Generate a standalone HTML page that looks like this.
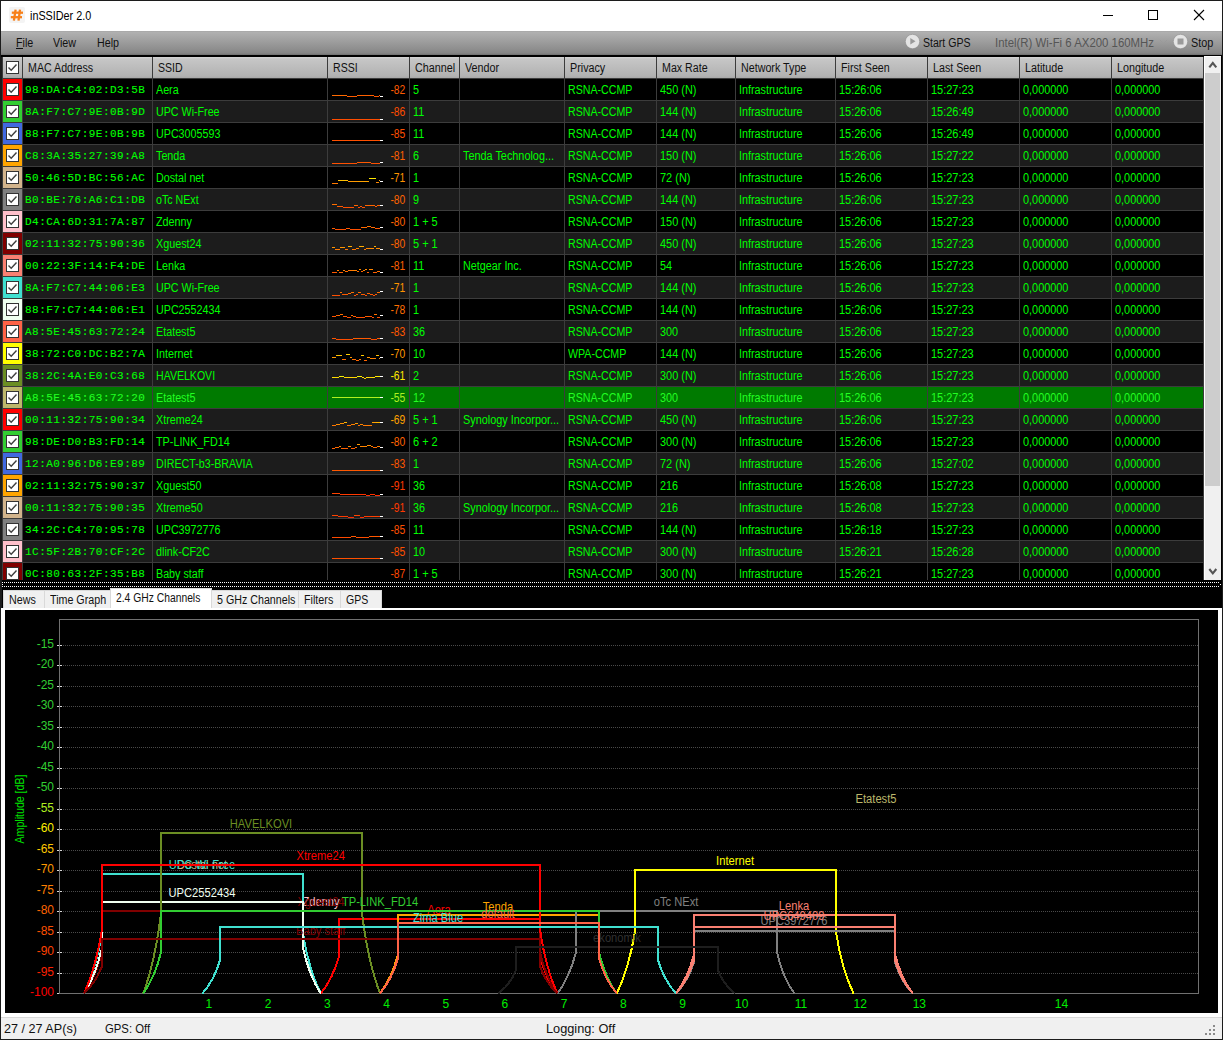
<!DOCTYPE html><html><head><meta charset="utf-8"><title>inSSIDer 2.0</title><style>
*{box-sizing:border-box}
html,body{margin:0;padding:0}
body{width:1223px;height:1040px;overflow:hidden;position:relative;background:#f0f0f0;font-family:"Liberation Sans",sans-serif;font-size:12px}
.a{position:absolute}
.t{position:absolute;white-space:nowrap;transform-origin:0 0;line-height:14px}
.sx{display:inline-block;transform:scaleX(.86);transform-origin:0 50%}

</style></head><body>
<div class="a" style="left:0;top:0;width:1223px;height:1040px;background:#1c1c1c"></div>
<div class="a" style="left:1px;top:1px;width:1221px;height:30px;background:#fff"></div>
<div class="a" style="left:9px;top:7px;width:16px;height:16px;background:#f4f4f4;border-radius:2px"></div>
<svg class="a" style="left:9px;top:7px" width="16" height="16"><g stroke="#f7801a" stroke-width="2.3" fill="none"><line x1="6.6" y1="2.6" x2="4.9" y2="13.6"/><line x1="11" y1="2.6" x2="9.5" y2="13.6"/><line x1="2.8" y1="5.7" x2="14" y2="5.7"/><line x1="1.8" y1="10.2" x2="13" y2="10.2"/></g></svg>
<div class="t" style="left:30px;top:9px;font-size:12px;color:#000"><span class="sx" style="transform:scaleX(.9)">inSSIDer 2.0</span></div>
<svg class="a" style="left:1090px;top:1px" width="132" height="30"><g stroke="#000" stroke-width="1" fill="none" shape-rendering="crispEdges"><line x1="13" y1="14.5" x2="23" y2="14.5"/><rect x="58.5" y="9.5" width="9" height="9"/></g><g stroke="#000" stroke-width="1.1" fill="none"><line x1="104" y1="9" x2="114" y2="19"/><line x1="114" y1="9" x2="104" y2="19"/></g></svg>
<div class="a" style="left:1px;top:31px;width:1221px;height:24px;background:linear-gradient(#a6a6a6,#b0b0b0 6%,#868686 92%,#6e6e6e)"></div>
<div class="a" style="left:1px;top:55px;width:1221px;height:2px;background:#000"></div>
<div class="t" style="left:16px;top:36px;color:#111"><span class="sx" style="transform:scaleX(0.892)">File</span></div>
<div class="t" style="left:53px;top:36px;color:#111"><span class="sx" style="transform:scaleX(0.894)">View</span></div>
<div class="t" style="left:97px;top:36px;color:#111"><span class="sx" style="transform:scaleX(0.893)">Help</span></div>
<div class="a" style="left:16px;top:48px;width:7px;height:1px;background:#111"></div>
<svg class="a" style="left:903.5px;top:33.3px" width="18" height="18"><circle cx="8.5" cy="8.5" r="7.2" fill="#e4e4e4" stroke="#8c8c8c" stroke-opacity=".6"/><path d="M6.3 5 L11.5 8.3 L6.3 11.5 Z" fill="#9a9a9a"/></svg>
<div class="t" style="left:923px;top:36px;color:#111"><span class="sx" style="transform:scaleX(.88)">Start GPS</span></div>
<div class="t" style="left:995px;top:36px;color:#555"><span class="sx" style="transform:scaleX(.95)">Intel(R) Wi-Fi 6 AX200 160MHz</span></div>
<svg class="a" style="left:1159px;top:39px" width="10" height="6"><path d="M1 1 L4.5 4.5 L8 1" stroke="#9a9a9a" fill="none"/></svg>
<svg class="a" style="left:1171.5px;top:32.5px" width="18" height="18"><circle cx="8.5" cy="8.5" r="7.2" fill="#e4e4e4" stroke="#8c8c8c" stroke-opacity=".6"/><rect x="5.5" y="5.5" width="6" height="6" fill="#9a9a9a"/></svg>
<div class="t" style="left:1191px;top:36px;color:#111"><span class="sx" style="transform:scaleX(.9)">Stop</span></div>
<div class="a" style="left:2px;top:57px;width:1220px;height:533px;background:#000"></div>
<div class="a" style="left:3px;top:57px;width:19px;height:21px;background:linear-gradient(#d6d6d6,#c6c6c6 10%,#b2b2b2 90%,#a8a8a8)"></div>
<div class="a" style="left:23px;top:57px;width:129px;height:21px;background:linear-gradient(#d6d6d6,#c6c6c6 10%,#b2b2b2 90%,#a8a8a8)"></div>
<div class="a" style="left:153px;top:57px;width:174px;height:21px;background:linear-gradient(#d6d6d6,#c6c6c6 10%,#b2b2b2 90%,#a8a8a8)"></div>
<div class="a" style="left:328px;top:57px;width:81px;height:21px;background:linear-gradient(#d6d6d6,#c6c6c6 10%,#b2b2b2 90%,#a8a8a8)"></div>
<div class="a" style="left:410px;top:57px;width:49px;height:21px;background:linear-gradient(#d6d6d6,#c6c6c6 10%,#b2b2b2 90%,#a8a8a8)"></div>
<div class="a" style="left:460px;top:57px;width:104px;height:21px;background:linear-gradient(#d6d6d6,#c6c6c6 10%,#b2b2b2 90%,#a8a8a8)"></div>
<div class="a" style="left:565px;top:57px;width:91px;height:21px;background:linear-gradient(#d6d6d6,#c6c6c6 10%,#b2b2b2 90%,#a8a8a8)"></div>
<div class="a" style="left:657px;top:57px;width:78px;height:21px;background:linear-gradient(#d6d6d6,#c6c6c6 10%,#b2b2b2 90%,#a8a8a8)"></div>
<div class="a" style="left:736px;top:57px;width:99px;height:21px;background:linear-gradient(#d6d6d6,#c6c6c6 10%,#b2b2b2 90%,#a8a8a8)"></div>
<div class="a" style="left:836px;top:57px;width:91px;height:21px;background:linear-gradient(#d6d6d6,#c6c6c6 10%,#b2b2b2 90%,#a8a8a8)"></div>
<div class="a" style="left:928px;top:57px;width:91px;height:21px;background:linear-gradient(#d6d6d6,#c6c6c6 10%,#b2b2b2 90%,#a8a8a8)"></div>
<div class="a" style="left:1020px;top:57px;width:91px;height:21px;background:linear-gradient(#d6d6d6,#c6c6c6 10%,#b2b2b2 90%,#a8a8a8)"></div>
<div class="a" style="left:1112px;top:57px;width:91px;height:21px;background:linear-gradient(#d6d6d6,#c6c6c6 10%,#b2b2b2 90%,#a8a8a8)"></div>
<div class="t" style="left:28px;top:61px;color:#111"><span class="sx" style="transform:scaleX(0.888)">MAC Address</span></div>
<div class="t" style="left:158px;top:61px;color:#111"><span class="sx" style="transform:scaleX(0.880)">SSID</span></div>
<div class="t" style="left:333px;top:61px;color:#111"><span class="sx" style="transform:scaleX(0.880)">RSSI</span></div>
<div class="t" style="left:415px;top:61px;color:#111"><span class="sx" style="transform:scaleX(0.896)">Channel</span></div>
<div class="t" style="left:465px;top:61px;color:#111"><span class="sx" style="transform:scaleX(0.896)">Vendor</span></div>
<div class="t" style="left:570px;top:61px;color:#111"><span class="sx" style="transform:scaleX(0.896)">Privacy</span></div>
<div class="t" style="left:662px;top:61px;color:#111"><span class="sx" style="transform:scaleX(0.889)">Max Rate</span></div>
<div class="t" style="left:741px;top:61px;color:#111"><span class="sx" style="transform:scaleX(0.893)">Network Type</span></div>
<div class="t" style="left:841px;top:61px;color:#111"><span class="sx" style="transform:scaleX(0.891)">First Seen</span></div>
<div class="t" style="left:933px;top:61px;color:#111"><span class="sx" style="transform:scaleX(0.891)">Last Seen</span></div>
<div class="t" style="left:1025px;top:61px;color:#111"><span class="sx" style="transform:scaleX(0.897)">Latitude</span></div>
<div class="t" style="left:1117px;top:61px;color:#111"><span class="sx" style="transform:scaleX(0.897)">Longitude</span></div>
<svg class="a" style="left:6px;top:61px" width="14" height="14"><rect x="0.5" y="0.5" width="12" height="12" fill="#fff" stroke="#333"/><path d="M2.5 6.5 L5.2 9.2 L10.5 3.5" stroke="#404040" stroke-width="1.4" fill="none"/></svg>
<div class="a" style="left:23px;top:79px;width:1180px;height:21px;background:#000"></div>
<div class="a" style="left:3px;top:79px;width:19px;height:21px;background:#ff0000"></div>
<svg class="a" style="left:6px;top:83px" width="14" height="14"><rect x="0.5" y="0.5" width="12" height="12" fill="#fff" stroke="#333"/><path d="M2.5 6.5 L5.2 9.2 L10.5 3.5" stroke="#404040" stroke-width="1.4" fill="none"/></svg>
<div class="t" style="left:25px;top:83px;color:#00ff00;font-family:'Liberation Mono', monospace;font-weight:normal;-webkit-text-stroke:0.1px #00ff00;font-size:11px;letter-spacing:0.48px">98:DA:C4:02:D3:5B</div>
<div class="t" style="left:155.5px;top:83px;color:#00ff00"><span class="sx" style="transform:scaleX(0.894)">Aera</span></div>
<div class="t" style="left:412.5px;top:83px;color:#00ff00"><span class="sx" style="transform:scaleX(0.900)">5</span></div>
<div class="t" style="left:567.5px;top:83px;color:#00ff00"><span class="sx" style="transform:scaleX(0.887)">RSNA-CCMP</span></div>
<div class="t" style="left:659.5px;top:83px;color:#00ff00"><span class="sx" style="transform:scaleX(0.911)">450 (N)</span></div>
<div class="t" style="left:738.5px;top:83px;color:#00ff00"><span class="sx" style="transform:scaleX(0.899)">Infrastructure</span></div>
<div class="t" style="left:838.5px;top:83px;color:#00ff00"><span class="sx" style="transform:scaleX(0.914)">15:26:06</span></div>
<div class="t" style="left:930.5px;top:83px;color:#00ff00"><span class="sx" style="transform:scaleX(0.914)">15:27:23</span></div>
<div class="t" style="left:1022.5px;top:83px;color:#00ff00"><span class="sx" style="transform:scaleX(0.907)">0,000000</span></div>
<div class="t" style="left:1114.5px;top:83px;color:#00ff00"><span class="sx" style="transform:scaleX(0.907)">0,000000</span></div>
<div class="t" style="left:385px;top:83px;width:20px;text-align:right;color:#ff5c00"><span class="sx" style="transform-origin:100% 50%">-82</span></div>
<div class="a" style="left:23px;top:101px;width:1180px;height:21px;background:#1c1c1c"></div>
<div class="a" style="left:3px;top:101px;width:19px;height:21px;background:#32cd32"></div>
<svg class="a" style="left:6px;top:105px" width="14" height="14"><rect x="0.5" y="0.5" width="12" height="12" fill="#fff" stroke="#333"/><path d="M2.5 6.5 L5.2 9.2 L10.5 3.5" stroke="#404040" stroke-width="1.4" fill="none"/></svg>
<div class="t" style="left:25px;top:105px;color:#00ff00;font-family:'Liberation Mono', monospace;font-weight:normal;-webkit-text-stroke:0.1px #00ff00;font-size:11px;letter-spacing:0.48px">8A:F7:C7:9E:0B:9D</div>
<div class="t" style="left:155.5px;top:105px;color:#00ff00"><span class="sx" style="transform:scaleX(0.891)">UPC Wi-Free</span></div>
<div class="t" style="left:412.5px;top:105px;color:#00ff00"><span class="sx" style="transform:scaleX(0.900)">11</span></div>
<div class="t" style="left:567.5px;top:105px;color:#00ff00"><span class="sx" style="transform:scaleX(0.887)">RSNA-CCMP</span></div>
<div class="t" style="left:659.5px;top:105px;color:#00ff00"><span class="sx" style="transform:scaleX(0.911)">144 (N)</span></div>
<div class="t" style="left:738.5px;top:105px;color:#00ff00"><span class="sx" style="transform:scaleX(0.899)">Infrastructure</span></div>
<div class="t" style="left:838.5px;top:105px;color:#00ff00"><span class="sx" style="transform:scaleX(0.914)">15:26:06</span></div>
<div class="t" style="left:930.5px;top:105px;color:#00ff00"><span class="sx" style="transform:scaleX(0.914)">15:26:49</span></div>
<div class="t" style="left:1022.5px;top:105px;color:#00ff00"><span class="sx" style="transform:scaleX(0.907)">0,000000</span></div>
<div class="t" style="left:1114.5px;top:105px;color:#00ff00"><span class="sx" style="transform:scaleX(0.907)">0,000000</span></div>
<div class="t" style="left:385px;top:105px;width:20px;text-align:right;color:#ff4d00"><span class="sx" style="transform-origin:100% 50%">-86</span></div>
<div class="a" style="left:23px;top:123px;width:1180px;height:21px;background:#000"></div>
<div class="a" style="left:3px;top:123px;width:19px;height:21px;background:#4169e1"></div>
<svg class="a" style="left:6px;top:127px" width="14" height="14"><rect x="0.5" y="0.5" width="12" height="12" fill="#fff" stroke="#333"/><path d="M2.5 6.5 L5.2 9.2 L10.5 3.5" stroke="#404040" stroke-width="1.4" fill="none"/></svg>
<div class="t" style="left:25px;top:127px;color:#00ff00;font-family:'Liberation Mono', monospace;font-weight:normal;-webkit-text-stroke:0.1px #00ff00;font-size:11px;letter-spacing:0.48px">88:F7:C7:9E:0B:9B</div>
<div class="t" style="left:155.5px;top:127px;color:#00ff00"><span class="sx" style="transform:scaleX(0.893)">UPC3005593</span></div>
<div class="t" style="left:412.5px;top:127px;color:#00ff00"><span class="sx" style="transform:scaleX(0.900)">11</span></div>
<div class="t" style="left:567.5px;top:127px;color:#00ff00"><span class="sx" style="transform:scaleX(0.887)">RSNA-CCMP</span></div>
<div class="t" style="left:659.5px;top:127px;color:#00ff00"><span class="sx" style="transform:scaleX(0.911)">144 (N)</span></div>
<div class="t" style="left:738.5px;top:127px;color:#00ff00"><span class="sx" style="transform:scaleX(0.899)">Infrastructure</span></div>
<div class="t" style="left:838.5px;top:127px;color:#00ff00"><span class="sx" style="transform:scaleX(0.914)">15:26:06</span></div>
<div class="t" style="left:930.5px;top:127px;color:#00ff00"><span class="sx" style="transform:scaleX(0.914)">15:26:49</span></div>
<div class="t" style="left:1022.5px;top:127px;color:#00ff00"><span class="sx" style="transform:scaleX(0.907)">0,000000</span></div>
<div class="t" style="left:1114.5px;top:127px;color:#00ff00"><span class="sx" style="transform:scaleX(0.907)">0,000000</span></div>
<div class="t" style="left:385px;top:127px;width:20px;text-align:right;color:#ff5000"><span class="sx" style="transform-origin:100% 50%">-85</span></div>
<div class="a" style="left:23px;top:145px;width:1180px;height:21px;background:#1c1c1c"></div>
<div class="a" style="left:3px;top:145px;width:19px;height:21px;background:#ffa500"></div>
<svg class="a" style="left:6px;top:149px" width="14" height="14"><rect x="0.5" y="0.5" width="12" height="12" fill="#fff" stroke="#333"/><path d="M2.5 6.5 L5.2 9.2 L10.5 3.5" stroke="#404040" stroke-width="1.4" fill="none"/></svg>
<div class="t" style="left:25px;top:149px;color:#00ff00;font-family:'Liberation Mono', monospace;font-weight:normal;-webkit-text-stroke:0.1px #00ff00;font-size:11px;letter-spacing:0.48px">C8:3A:35:27:39:A8</div>
<div class="t" style="left:155.5px;top:149px;color:#00ff00"><span class="sx" style="transform:scaleX(0.896)">Tenda</span></div>
<div class="t" style="left:412.5px;top:149px;color:#00ff00"><span class="sx" style="transform:scaleX(0.900)">6</span></div>
<div class="t" style="left:462.5px;top:149px;color:#00ff00"><span class="sx" style="transform:scaleX(0.905)">Tenda Technolog...</span></div>
<div class="t" style="left:567.5px;top:149px;color:#00ff00"><span class="sx" style="transform:scaleX(0.887)">RSNA-CCMP</span></div>
<div class="t" style="left:659.5px;top:149px;color:#00ff00"><span class="sx" style="transform:scaleX(0.911)">150 (N)</span></div>
<div class="t" style="left:738.5px;top:149px;color:#00ff00"><span class="sx" style="transform:scaleX(0.899)">Infrastructure</span></div>
<div class="t" style="left:838.5px;top:149px;color:#00ff00"><span class="sx" style="transform:scaleX(0.914)">15:26:06</span></div>
<div class="t" style="left:930.5px;top:149px;color:#00ff00"><span class="sx" style="transform:scaleX(0.914)">15:27:22</span></div>
<div class="t" style="left:1022.5px;top:149px;color:#00ff00"><span class="sx" style="transform:scaleX(0.907)">0,000000</span></div>
<div class="t" style="left:1114.5px;top:149px;color:#00ff00"><span class="sx" style="transform:scaleX(0.907)">0,000000</span></div>
<div class="t" style="left:385px;top:149px;width:20px;text-align:right;color:#ff6000"><span class="sx" style="transform-origin:100% 50%">-81</span></div>
<div class="a" style="left:23px;top:167px;width:1180px;height:21px;background:#000"></div>
<div class="a" style="left:3px;top:167px;width:19px;height:21px;background:#d2b48c"></div>
<svg class="a" style="left:6px;top:171px" width="14" height="14"><rect x="0.5" y="0.5" width="12" height="12" fill="#fff" stroke="#333"/><path d="M2.5 6.5 L5.2 9.2 L10.5 3.5" stroke="#404040" stroke-width="1.4" fill="none"/></svg>
<div class="t" style="left:25px;top:171px;color:#00ff00;font-family:'Liberation Mono', monospace;font-weight:normal;-webkit-text-stroke:0.1px #00ff00;font-size:11px;letter-spacing:0.48px">50:46:5D:BC:56:AC</div>
<div class="t" style="left:155.5px;top:171px;color:#00ff00"><span class="sx" style="transform:scaleX(0.894)">Dostal net</span></div>
<div class="t" style="left:412.5px;top:171px;color:#00ff00"><span class="sx" style="transform:scaleX(0.900)">1</span></div>
<div class="t" style="left:567.5px;top:171px;color:#00ff00"><span class="sx" style="transform:scaleX(0.887)">RSNA-CCMP</span></div>
<div class="t" style="left:659.5px;top:171px;color:#00ff00"><span class="sx" style="transform:scaleX(0.914)">72 (N)</span></div>
<div class="t" style="left:738.5px;top:171px;color:#00ff00"><span class="sx" style="transform:scaleX(0.899)">Infrastructure</span></div>
<div class="t" style="left:838.5px;top:171px;color:#00ff00"><span class="sx" style="transform:scaleX(0.914)">15:26:06</span></div>
<div class="t" style="left:930.5px;top:171px;color:#00ff00"><span class="sx" style="transform:scaleX(0.914)">15:27:23</span></div>
<div class="t" style="left:1022.5px;top:171px;color:#00ff00"><span class="sx" style="transform:scaleX(0.907)">0,000000</span></div>
<div class="t" style="left:1114.5px;top:171px;color:#00ff00"><span class="sx" style="transform:scaleX(0.907)">0,000000</span></div>
<div class="t" style="left:385px;top:171px;width:20px;text-align:right;color:#ff9400"><span class="sx" style="transform-origin:100% 50%">-71</span></div>
<div class="a" style="left:23px;top:189px;width:1180px;height:21px;background:#1c1c1c"></div>
<div class="a" style="left:3px;top:189px;width:19px;height:21px;background:#808080"></div>
<svg class="a" style="left:6px;top:193px" width="14" height="14"><rect x="0.5" y="0.5" width="12" height="12" fill="#fff" stroke="#333"/><path d="M2.5 6.5 L5.2 9.2 L10.5 3.5" stroke="#404040" stroke-width="1.4" fill="none"/></svg>
<div class="t" style="left:25px;top:193px;color:#00ff00;font-family:'Liberation Mono', monospace;font-weight:normal;-webkit-text-stroke:0.1px #00ff00;font-size:11px;letter-spacing:0.48px">B0:BE:76:A6:C1:DB</div>
<div class="t" style="left:155.5px;top:193px;color:#00ff00"><span class="sx" style="transform:scaleX(0.887)">oTc NExt</span></div>
<div class="t" style="left:412.5px;top:193px;color:#00ff00"><span class="sx" style="transform:scaleX(0.900)">9</span></div>
<div class="t" style="left:567.5px;top:193px;color:#00ff00"><span class="sx" style="transform:scaleX(0.887)">RSNA-CCMP</span></div>
<div class="t" style="left:659.5px;top:193px;color:#00ff00"><span class="sx" style="transform:scaleX(0.911)">144 (N)</span></div>
<div class="t" style="left:738.5px;top:193px;color:#00ff00"><span class="sx" style="transform:scaleX(0.899)">Infrastructure</span></div>
<div class="t" style="left:838.5px;top:193px;color:#00ff00"><span class="sx" style="transform:scaleX(0.914)">15:26:06</span></div>
<div class="t" style="left:930.5px;top:193px;color:#00ff00"><span class="sx" style="transform:scaleX(0.914)">15:27:23</span></div>
<div class="t" style="left:1022.5px;top:193px;color:#00ff00"><span class="sx" style="transform:scaleX(0.907)">0,000000</span></div>
<div class="t" style="left:1114.5px;top:193px;color:#00ff00"><span class="sx" style="transform:scaleX(0.907)">0,000000</span></div>
<div class="t" style="left:385px;top:193px;width:20px;text-align:right;color:#ff6400"><span class="sx" style="transform-origin:100% 50%">-80</span></div>
<div class="a" style="left:23px;top:211px;width:1180px;height:21px;background:#000"></div>
<div class="a" style="left:3px;top:211px;width:19px;height:21px;background:#ffc0cb"></div>
<svg class="a" style="left:6px;top:215px" width="14" height="14"><rect x="0.5" y="0.5" width="12" height="12" fill="#fff" stroke="#333"/><path d="M2.5 6.5 L5.2 9.2 L10.5 3.5" stroke="#404040" stroke-width="1.4" fill="none"/></svg>
<div class="t" style="left:25px;top:215px;color:#00ff00;font-family:'Liberation Mono', monospace;font-weight:normal;-webkit-text-stroke:0.1px #00ff00;font-size:11px;letter-spacing:0.48px">D4:CA:6D:31:7A:87</div>
<div class="t" style="left:155.5px;top:215px;color:#00ff00"><span class="sx" style="transform:scaleX(0.896)">Zdenny</span></div>
<div class="t" style="left:412.5px;top:215px;color:#00ff00"><span class="sx" style="transform:scaleX(0.914)">1 + 5</span></div>
<div class="t" style="left:567.5px;top:215px;color:#00ff00"><span class="sx" style="transform:scaleX(0.887)">RSNA-CCMP</span></div>
<div class="t" style="left:659.5px;top:215px;color:#00ff00"><span class="sx" style="transform:scaleX(0.911)">150 (N)</span></div>
<div class="t" style="left:738.5px;top:215px;color:#00ff00"><span class="sx" style="transform:scaleX(0.899)">Infrastructure</span></div>
<div class="t" style="left:838.5px;top:215px;color:#00ff00"><span class="sx" style="transform:scaleX(0.914)">15:26:06</span></div>
<div class="t" style="left:930.5px;top:215px;color:#00ff00"><span class="sx" style="transform:scaleX(0.914)">15:27:23</span></div>
<div class="t" style="left:1022.5px;top:215px;color:#00ff00"><span class="sx" style="transform:scaleX(0.907)">0,000000</span></div>
<div class="t" style="left:1114.5px;top:215px;color:#00ff00"><span class="sx" style="transform:scaleX(0.907)">0,000000</span></div>
<div class="t" style="left:385px;top:215px;width:20px;text-align:right;color:#ff6400"><span class="sx" style="transform-origin:100% 50%">-80</span></div>
<div class="a" style="left:23px;top:233px;width:1180px;height:21px;background:#1c1c1c"></div>
<div class="a" style="left:3px;top:233px;width:19px;height:21px;background:#800000"></div>
<svg class="a" style="left:6px;top:237px" width="14" height="14"><rect x="0.5" y="0.5" width="12" height="12" fill="#fff" stroke="#333"/><path d="M2.5 6.5 L5.2 9.2 L10.5 3.5" stroke="#404040" stroke-width="1.4" fill="none"/></svg>
<div class="t" style="left:25px;top:237px;color:#00ff00;font-family:'Liberation Mono', monospace;font-weight:normal;-webkit-text-stroke:0.1px #00ff00;font-size:11px;letter-spacing:0.48px">02:11:32:75:90:36</div>
<div class="t" style="left:155.5px;top:237px;color:#00ff00"><span class="sx" style="transform:scaleX(0.897)">Xguest24</span></div>
<div class="t" style="left:412.5px;top:237px;color:#00ff00"><span class="sx" style="transform:scaleX(0.914)">5 + 1</span></div>
<div class="t" style="left:567.5px;top:237px;color:#00ff00"><span class="sx" style="transform:scaleX(0.887)">RSNA-CCMP</span></div>
<div class="t" style="left:659.5px;top:237px;color:#00ff00"><span class="sx" style="transform:scaleX(0.911)">450 (N)</span></div>
<div class="t" style="left:738.5px;top:237px;color:#00ff00"><span class="sx" style="transform:scaleX(0.899)">Infrastructure</span></div>
<div class="t" style="left:838.5px;top:237px;color:#00ff00"><span class="sx" style="transform:scaleX(0.914)">15:26:06</span></div>
<div class="t" style="left:930.5px;top:237px;color:#00ff00"><span class="sx" style="transform:scaleX(0.914)">15:27:23</span></div>
<div class="t" style="left:1022.5px;top:237px;color:#00ff00"><span class="sx" style="transform:scaleX(0.907)">0,000000</span></div>
<div class="t" style="left:1114.5px;top:237px;color:#00ff00"><span class="sx" style="transform:scaleX(0.907)">0,000000</span></div>
<div class="t" style="left:385px;top:237px;width:20px;text-align:right;color:#ff6400"><span class="sx" style="transform-origin:100% 50%">-80</span></div>
<div class="a" style="left:23px;top:255px;width:1180px;height:21px;background:#000"></div>
<div class="a" style="left:3px;top:255px;width:19px;height:21px;background:#fa8072"></div>
<svg class="a" style="left:6px;top:259px" width="14" height="14"><rect x="0.5" y="0.5" width="12" height="12" fill="#fff" stroke="#333"/><path d="M2.5 6.5 L5.2 9.2 L10.5 3.5" stroke="#404040" stroke-width="1.4" fill="none"/></svg>
<div class="t" style="left:25px;top:259px;color:#00ff00;font-family:'Liberation Mono', monospace;font-weight:normal;-webkit-text-stroke:0.1px #00ff00;font-size:11px;letter-spacing:0.48px">00:22:3F:14:F4:DE</div>
<div class="t" style="left:155.5px;top:259px;color:#00ff00"><span class="sx" style="transform:scaleX(0.896)">Lenka</span></div>
<div class="t" style="left:412.5px;top:259px;color:#00ff00"><span class="sx" style="transform:scaleX(0.900)">11</span></div>
<div class="t" style="left:462.5px;top:259px;color:#00ff00"><span class="sx" style="transform:scaleX(0.899)">Netgear Inc.</span></div>
<div class="t" style="left:567.5px;top:259px;color:#00ff00"><span class="sx" style="transform:scaleX(0.887)">RSNA-CCMP</span></div>
<div class="t" style="left:659.5px;top:259px;color:#00ff00"><span class="sx" style="transform:scaleX(0.900)">54</span></div>
<div class="t" style="left:738.5px;top:259px;color:#00ff00"><span class="sx" style="transform:scaleX(0.899)">Infrastructure</span></div>
<div class="t" style="left:838.5px;top:259px;color:#00ff00"><span class="sx" style="transform:scaleX(0.914)">15:26:06</span></div>
<div class="t" style="left:930.5px;top:259px;color:#00ff00"><span class="sx" style="transform:scaleX(0.914)">15:27:23</span></div>
<div class="t" style="left:1022.5px;top:259px;color:#00ff00"><span class="sx" style="transform:scaleX(0.907)">0,000000</span></div>
<div class="t" style="left:1114.5px;top:259px;color:#00ff00"><span class="sx" style="transform:scaleX(0.907)">0,000000</span></div>
<div class="t" style="left:385px;top:259px;width:20px;text-align:right;color:#ff6000"><span class="sx" style="transform-origin:100% 50%">-81</span></div>
<div class="a" style="left:23px;top:277px;width:1180px;height:21px;background:#1c1c1c"></div>
<div class="a" style="left:3px;top:277px;width:19px;height:21px;background:#40e0d0"></div>
<svg class="a" style="left:6px;top:281px" width="14" height="14"><rect x="0.5" y="0.5" width="12" height="12" fill="#fff" stroke="#333"/><path d="M2.5 6.5 L5.2 9.2 L10.5 3.5" stroke="#404040" stroke-width="1.4" fill="none"/></svg>
<div class="t" style="left:25px;top:281px;color:#00ff00;font-family:'Liberation Mono', monospace;font-weight:normal;-webkit-text-stroke:0.1px #00ff00;font-size:11px;letter-spacing:0.48px">8A:F7:C7:44:06:E3</div>
<div class="t" style="left:155.5px;top:281px;color:#00ff00"><span class="sx" style="transform:scaleX(0.891)">UPC Wi-Free</span></div>
<div class="t" style="left:412.5px;top:281px;color:#00ff00"><span class="sx" style="transform:scaleX(0.900)">1</span></div>
<div class="t" style="left:567.5px;top:281px;color:#00ff00"><span class="sx" style="transform:scaleX(0.887)">RSNA-CCMP</span></div>
<div class="t" style="left:659.5px;top:281px;color:#00ff00"><span class="sx" style="transform:scaleX(0.911)">144 (N)</span></div>
<div class="t" style="left:738.5px;top:281px;color:#00ff00"><span class="sx" style="transform:scaleX(0.899)">Infrastructure</span></div>
<div class="t" style="left:838.5px;top:281px;color:#00ff00"><span class="sx" style="transform:scaleX(0.914)">15:26:06</span></div>
<div class="t" style="left:930.5px;top:281px;color:#00ff00"><span class="sx" style="transform:scaleX(0.914)">15:27:23</span></div>
<div class="t" style="left:1022.5px;top:281px;color:#00ff00"><span class="sx" style="transform:scaleX(0.907)">0,000000</span></div>
<div class="t" style="left:1114.5px;top:281px;color:#00ff00"><span class="sx" style="transform:scaleX(0.907)">0,000000</span></div>
<div class="t" style="left:385px;top:281px;width:20px;text-align:right;color:#ff9400"><span class="sx" style="transform-origin:100% 50%">-71</span></div>
<div class="a" style="left:23px;top:299px;width:1180px;height:21px;background:#000"></div>
<div class="a" style="left:3px;top:299px;width:19px;height:21px;background:#f0fff0"></div>
<svg class="a" style="left:6px;top:303px" width="14" height="14"><rect x="0.5" y="0.5" width="12" height="12" fill="#fff" stroke="#333"/><path d="M2.5 6.5 L5.2 9.2 L10.5 3.5" stroke="#404040" stroke-width="1.4" fill="none"/></svg>
<div class="t" style="left:25px;top:303px;color:#00ff00;font-family:'Liberation Mono', monospace;font-weight:normal;-webkit-text-stroke:0.1px #00ff00;font-size:11px;letter-spacing:0.48px">88:F7:C7:44:06:E1</div>
<div class="t" style="left:155.5px;top:303px;color:#00ff00"><span class="sx" style="transform:scaleX(0.893)">UPC2552434</span></div>
<div class="t" style="left:412.5px;top:303px;color:#00ff00"><span class="sx" style="transform:scaleX(0.900)">1</span></div>
<div class="t" style="left:567.5px;top:303px;color:#00ff00"><span class="sx" style="transform:scaleX(0.887)">RSNA-CCMP</span></div>
<div class="t" style="left:659.5px;top:303px;color:#00ff00"><span class="sx" style="transform:scaleX(0.911)">144 (N)</span></div>
<div class="t" style="left:738.5px;top:303px;color:#00ff00"><span class="sx" style="transform:scaleX(0.899)">Infrastructure</span></div>
<div class="t" style="left:838.5px;top:303px;color:#00ff00"><span class="sx" style="transform:scaleX(0.914)">15:26:06</span></div>
<div class="t" style="left:930.5px;top:303px;color:#00ff00"><span class="sx" style="transform:scaleX(0.914)">15:27:23</span></div>
<div class="t" style="left:1022.5px;top:303px;color:#00ff00"><span class="sx" style="transform:scaleX(0.907)">0,000000</span></div>
<div class="t" style="left:1114.5px;top:303px;color:#00ff00"><span class="sx" style="transform:scaleX(0.907)">0,000000</span></div>
<div class="t" style="left:385px;top:303px;width:20px;text-align:right;color:#ff6f00"><span class="sx" style="transform-origin:100% 50%">-78</span></div>
<div class="a" style="left:23px;top:321px;width:1180px;height:21px;background:#1c1c1c"></div>
<div class="a" style="left:3px;top:321px;width:19px;height:21px;background:#ff6347"></div>
<svg class="a" style="left:6px;top:325px" width="14" height="14"><rect x="0.5" y="0.5" width="12" height="12" fill="#fff" stroke="#333"/><path d="M2.5 6.5 L5.2 9.2 L10.5 3.5" stroke="#404040" stroke-width="1.4" fill="none"/></svg>
<div class="t" style="left:25px;top:325px;color:#00ff00;font-family:'Liberation Mono', monospace;font-weight:normal;-webkit-text-stroke:0.1px #00ff00;font-size:11px;letter-spacing:0.48px">A8:5E:45:63:72:24</div>
<div class="t" style="left:155.5px;top:325px;color:#00ff00"><span class="sx" style="transform:scaleX(0.896)">Etatest5</span></div>
<div class="t" style="left:412.5px;top:325px;color:#00ff00"><span class="sx" style="transform:scaleX(0.900)">36</span></div>
<div class="t" style="left:567.5px;top:325px;color:#00ff00"><span class="sx" style="transform:scaleX(0.887)">RSNA-CCMP</span></div>
<div class="t" style="left:659.5px;top:325px;color:#00ff00"><span class="sx" style="transform:scaleX(0.900)">300</span></div>
<div class="t" style="left:738.5px;top:325px;color:#00ff00"><span class="sx" style="transform:scaleX(0.899)">Infrastructure</span></div>
<div class="t" style="left:838.5px;top:325px;color:#00ff00"><span class="sx" style="transform:scaleX(0.914)">15:26:06</span></div>
<div class="t" style="left:930.5px;top:325px;color:#00ff00"><span class="sx" style="transform:scaleX(0.914)">15:27:23</span></div>
<div class="t" style="left:1022.5px;top:325px;color:#00ff00"><span class="sx" style="transform:scaleX(0.907)">0,000000</span></div>
<div class="t" style="left:1114.5px;top:325px;color:#00ff00"><span class="sx" style="transform:scaleX(0.907)">0,000000</span></div>
<div class="t" style="left:385px;top:325px;width:20px;text-align:right;color:#ff5800"><span class="sx" style="transform-origin:100% 50%">-83</span></div>
<div class="a" style="left:23px;top:343px;width:1180px;height:21px;background:#000"></div>
<div class="a" style="left:3px;top:343px;width:19px;height:21px;background:#ffff00"></div>
<svg class="a" style="left:6px;top:347px" width="14" height="14"><rect x="0.5" y="0.5" width="12" height="12" fill="#fff" stroke="#333"/><path d="M2.5 6.5 L5.2 9.2 L10.5 3.5" stroke="#404040" stroke-width="1.4" fill="none"/></svg>
<div class="t" style="left:25px;top:347px;color:#00ff00;font-family:'Liberation Mono', monospace;font-weight:normal;-webkit-text-stroke:0.1px #00ff00;font-size:11px;letter-spacing:0.48px">38:72:C0:DC:B2:7A</div>
<div class="t" style="left:155.5px;top:347px;color:#00ff00"><span class="sx" style="transform:scaleX(0.898)">Internet</span></div>
<div class="t" style="left:412.5px;top:347px;color:#00ff00"><span class="sx" style="transform:scaleX(0.900)">10</span></div>
<div class="t" style="left:567.5px;top:347px;color:#00ff00"><span class="sx" style="transform:scaleX(0.887)">WPA-CCMP</span></div>
<div class="t" style="left:659.5px;top:347px;color:#00ff00"><span class="sx" style="transform:scaleX(0.911)">144 (N)</span></div>
<div class="t" style="left:738.5px;top:347px;color:#00ff00"><span class="sx" style="transform:scaleX(0.899)">Infrastructure</span></div>
<div class="t" style="left:838.5px;top:347px;color:#00ff00"><span class="sx" style="transform:scaleX(0.914)">15:26:06</span></div>
<div class="t" style="left:930.5px;top:347px;color:#00ff00"><span class="sx" style="transform:scaleX(0.914)">15:27:23</span></div>
<div class="t" style="left:1022.5px;top:347px;color:#00ff00"><span class="sx" style="transform:scaleX(0.907)">0,000000</span></div>
<div class="t" style="left:1114.5px;top:347px;color:#00ff00"><span class="sx" style="transform:scaleX(0.907)">0,000000</span></div>
<div class="t" style="left:385px;top:347px;width:20px;text-align:right;color:#ff9900"><span class="sx" style="transform-origin:100% 50%">-70</span></div>
<div class="a" style="left:23px;top:365px;width:1180px;height:21px;background:#1c1c1c"></div>
<div class="a" style="left:3px;top:365px;width:19px;height:21px;background:#6b8e23"></div>
<svg class="a" style="left:6px;top:369px" width="14" height="14"><rect x="0.5" y="0.5" width="12" height="12" fill="#fff" stroke="#333"/><path d="M2.5 6.5 L5.2 9.2 L10.5 3.5" stroke="#404040" stroke-width="1.4" fill="none"/></svg>
<div class="t" style="left:25px;top:369px;color:#00ff00;font-family:'Liberation Mono', monospace;font-weight:normal;-webkit-text-stroke:0.1px #00ff00;font-size:11px;letter-spacing:0.48px">38:2C:4A:E0:C3:68</div>
<div class="t" style="left:155.5px;top:369px;color:#00ff00"><span class="sx" style="transform:scaleX(0.880)">HAVELKOVI</span></div>
<div class="t" style="left:412.5px;top:369px;color:#00ff00"><span class="sx" style="transform:scaleX(0.900)">2</span></div>
<div class="t" style="left:567.5px;top:369px;color:#00ff00"><span class="sx" style="transform:scaleX(0.887)">RSNA-CCMP</span></div>
<div class="t" style="left:659.5px;top:369px;color:#00ff00"><span class="sx" style="transform:scaleX(0.911)">300 (N)</span></div>
<div class="t" style="left:738.5px;top:369px;color:#00ff00"><span class="sx" style="transform:scaleX(0.899)">Infrastructure</span></div>
<div class="t" style="left:838.5px;top:369px;color:#00ff00"><span class="sx" style="transform:scaleX(0.914)">15:26:06</span></div>
<div class="t" style="left:930.5px;top:369px;color:#00ff00"><span class="sx" style="transform:scaleX(0.914)">15:27:23</span></div>
<div class="t" style="left:1022.5px;top:369px;color:#00ff00"><span class="sx" style="transform:scaleX(0.907)">0,000000</span></div>
<div class="t" style="left:1114.5px;top:369px;color:#00ff00"><span class="sx" style="transform:scaleX(0.907)">0,000000</span></div>
<div class="t" style="left:385px;top:369px;width:20px;text-align:right;color:#ffe800"><span class="sx" style="transform-origin:100% 50%">-61</span></div>
<div class="a" style="left:23px;top:387px;width:1180px;height:21px;background:#007a00"></div>
<div class="a" style="left:3px;top:387px;width:19px;height:21px;background:#bdb76b"></div>
<svg class="a" style="left:6px;top:391px" width="14" height="14"><rect x="0.5" y="0.5" width="12" height="12" fill="#fff" stroke="#333"/><path d="M2.5 6.5 L5.2 9.2 L10.5 3.5" stroke="#404040" stroke-width="1.4" fill="none"/></svg>
<div class="t" style="left:25px;top:391px;color:#22ff22;font-family:'Liberation Mono', monospace;font-weight:normal;-webkit-text-stroke:0.1px #22ff22;font-size:11px;letter-spacing:0.48px">A8:5E:45:63:72:20</div>
<div class="t" style="left:155.5px;top:391px;color:#22ff22"><span class="sx" style="transform:scaleX(0.896)">Etatest5</span></div>
<div class="t" style="left:412.5px;top:391px;color:#22ff22"><span class="sx" style="transform:scaleX(0.900)">12</span></div>
<div class="t" style="left:567.5px;top:391px;color:#22ff22"><span class="sx" style="transform:scaleX(0.887)">RSNA-CCMP</span></div>
<div class="t" style="left:659.5px;top:391px;color:#22ff22"><span class="sx" style="transform:scaleX(0.900)">300</span></div>
<div class="t" style="left:738.5px;top:391px;color:#22ff22"><span class="sx" style="transform:scaleX(0.899)">Infrastructure</span></div>
<div class="t" style="left:838.5px;top:391px;color:#22ff22"><span class="sx" style="transform:scaleX(0.914)">15:26:06</span></div>
<div class="t" style="left:930.5px;top:391px;color:#22ff22"><span class="sx" style="transform:scaleX(0.914)">15:27:23</span></div>
<div class="t" style="left:1022.5px;top:391px;color:#22ff22"><span class="sx" style="transform:scaleX(0.907)">0,000000</span></div>
<div class="t" style="left:1114.5px;top:391px;color:#22ff22"><span class="sx" style="transform:scaleX(0.907)">0,000000</span></div>
<div class="t" style="left:385px;top:391px;width:20px;text-align:right;color:#b0f020"><span class="sx" style="transform-origin:100% 50%">-55</span></div>
<div class="a" style="left:23px;top:409px;width:1180px;height:21px;background:#1c1c1c"></div>
<div class="a" style="left:3px;top:409px;width:19px;height:21px;background:#ff0000"></div>
<svg class="a" style="left:6px;top:413px" width="14" height="14"><rect x="0.5" y="0.5" width="12" height="12" fill="#fff" stroke="#333"/><path d="M2.5 6.5 L5.2 9.2 L10.5 3.5" stroke="#404040" stroke-width="1.4" fill="none"/></svg>
<div class="t" style="left:25px;top:413px;color:#00ff00;font-family:'Liberation Mono', monospace;font-weight:normal;-webkit-text-stroke:0.1px #00ff00;font-size:11px;letter-spacing:0.48px">00:11:32:75:90:34</div>
<div class="t" style="left:155.5px;top:413px;color:#00ff00"><span class="sx" style="transform:scaleX(0.897)">Xtreme24</span></div>
<div class="t" style="left:412.5px;top:413px;color:#00ff00"><span class="sx" style="transform:scaleX(0.914)">5 + 1</span></div>
<div class="t" style="left:462.5px;top:413px;color:#00ff00"><span class="sx" style="transform:scaleX(0.906)">Synology Incorpor...</span></div>
<div class="t" style="left:567.5px;top:413px;color:#00ff00"><span class="sx" style="transform:scaleX(0.887)">RSNA-CCMP</span></div>
<div class="t" style="left:659.5px;top:413px;color:#00ff00"><span class="sx" style="transform:scaleX(0.911)">450 (N)</span></div>
<div class="t" style="left:738.5px;top:413px;color:#00ff00"><span class="sx" style="transform:scaleX(0.899)">Infrastructure</span></div>
<div class="t" style="left:838.5px;top:413px;color:#00ff00"><span class="sx" style="transform:scaleX(0.914)">15:26:06</span></div>
<div class="t" style="left:930.5px;top:413px;color:#00ff00"><span class="sx" style="transform:scaleX(0.914)">15:27:23</span></div>
<div class="t" style="left:1022.5px;top:413px;color:#00ff00"><span class="sx" style="transform:scaleX(0.907)">0,000000</span></div>
<div class="t" style="left:1114.5px;top:413px;color:#00ff00"><span class="sx" style="transform:scaleX(0.907)">0,000000</span></div>
<div class="t" style="left:385px;top:413px;width:20px;text-align:right;color:#ffa200"><span class="sx" style="transform-origin:100% 50%">-69</span></div>
<div class="a" style="left:23px;top:431px;width:1180px;height:21px;background:#000"></div>
<div class="a" style="left:3px;top:431px;width:19px;height:21px;background:#32cd32"></div>
<svg class="a" style="left:6px;top:435px" width="14" height="14"><rect x="0.5" y="0.5" width="12" height="12" fill="#fff" stroke="#333"/><path d="M2.5 6.5 L5.2 9.2 L10.5 3.5" stroke="#404040" stroke-width="1.4" fill="none"/></svg>
<div class="t" style="left:25px;top:435px;color:#00ff00;font-family:'Liberation Mono', monospace;font-weight:normal;-webkit-text-stroke:0.1px #00ff00;font-size:11px;letter-spacing:0.48px">98:DE:D0:B3:FD:14</div>
<div class="t" style="left:155.5px;top:435px;color:#00ff00"><span class="sx" style="transform:scaleX(0.899)">TP-LINK_FD14</span></div>
<div class="t" style="left:412.5px;top:435px;color:#00ff00"><span class="sx" style="transform:scaleX(0.914)">6 + 2</span></div>
<div class="t" style="left:567.5px;top:435px;color:#00ff00"><span class="sx" style="transform:scaleX(0.887)">RSNA-CCMP</span></div>
<div class="t" style="left:659.5px;top:435px;color:#00ff00"><span class="sx" style="transform:scaleX(0.911)">300 (N)</span></div>
<div class="t" style="left:738.5px;top:435px;color:#00ff00"><span class="sx" style="transform:scaleX(0.899)">Infrastructure</span></div>
<div class="t" style="left:838.5px;top:435px;color:#00ff00"><span class="sx" style="transform:scaleX(0.914)">15:26:06</span></div>
<div class="t" style="left:930.5px;top:435px;color:#00ff00"><span class="sx" style="transform:scaleX(0.914)">15:27:23</span></div>
<div class="t" style="left:1022.5px;top:435px;color:#00ff00"><span class="sx" style="transform:scaleX(0.907)">0,000000</span></div>
<div class="t" style="left:1114.5px;top:435px;color:#00ff00"><span class="sx" style="transform:scaleX(0.907)">0,000000</span></div>
<div class="t" style="left:385px;top:435px;width:20px;text-align:right;color:#ff6400"><span class="sx" style="transform-origin:100% 50%">-80</span></div>
<div class="a" style="left:23px;top:453px;width:1180px;height:21px;background:#1c1c1c"></div>
<div class="a" style="left:3px;top:453px;width:19px;height:21px;background:#4169e1"></div>
<svg class="a" style="left:6px;top:457px" width="14" height="14"><rect x="0.5" y="0.5" width="12" height="12" fill="#fff" stroke="#333"/><path d="M2.5 6.5 L5.2 9.2 L10.5 3.5" stroke="#404040" stroke-width="1.4" fill="none"/></svg>
<div class="t" style="left:25px;top:457px;color:#00ff00;font-family:'Liberation Mono', monospace;font-weight:normal;-webkit-text-stroke:0.1px #00ff00;font-size:11px;letter-spacing:0.48px">12:A0:96:D6:E9:89</div>
<div class="t" style="left:155.5px;top:457px;color:#00ff00"><span class="sx" style="transform:scaleX(0.891)">DIRECT-b3-BRAVIA</span></div>
<div class="t" style="left:412.5px;top:457px;color:#00ff00"><span class="sx" style="transform:scaleX(0.900)">1</span></div>
<div class="t" style="left:567.5px;top:457px;color:#00ff00"><span class="sx" style="transform:scaleX(0.887)">RSNA-CCMP</span></div>
<div class="t" style="left:659.5px;top:457px;color:#00ff00"><span class="sx" style="transform:scaleX(0.914)">72 (N)</span></div>
<div class="t" style="left:738.5px;top:457px;color:#00ff00"><span class="sx" style="transform:scaleX(0.899)">Infrastructure</span></div>
<div class="t" style="left:838.5px;top:457px;color:#00ff00"><span class="sx" style="transform:scaleX(0.914)">15:26:06</span></div>
<div class="t" style="left:930.5px;top:457px;color:#00ff00"><span class="sx" style="transform:scaleX(0.914)">15:27:02</span></div>
<div class="t" style="left:1022.5px;top:457px;color:#00ff00"><span class="sx" style="transform:scaleX(0.907)">0,000000</span></div>
<div class="t" style="left:1114.5px;top:457px;color:#00ff00"><span class="sx" style="transform:scaleX(0.907)">0,000000</span></div>
<div class="t" style="left:385px;top:457px;width:20px;text-align:right;color:#ff5800"><span class="sx" style="transform-origin:100% 50%">-83</span></div>
<div class="a" style="left:23px;top:475px;width:1180px;height:21px;background:#000"></div>
<div class="a" style="left:3px;top:475px;width:19px;height:21px;background:#ffa500"></div>
<svg class="a" style="left:6px;top:479px" width="14" height="14"><rect x="0.5" y="0.5" width="12" height="12" fill="#fff" stroke="#333"/><path d="M2.5 6.5 L5.2 9.2 L10.5 3.5" stroke="#404040" stroke-width="1.4" fill="none"/></svg>
<div class="t" style="left:25px;top:479px;color:#00ff00;font-family:'Liberation Mono', monospace;font-weight:normal;-webkit-text-stroke:0.1px #00ff00;font-size:11px;letter-spacing:0.48px">02:11:32:75:90:37</div>
<div class="t" style="left:155.5px;top:479px;color:#00ff00"><span class="sx" style="transform:scaleX(0.897)">Xguest50</span></div>
<div class="t" style="left:412.5px;top:479px;color:#00ff00"><span class="sx" style="transform:scaleX(0.900)">36</span></div>
<div class="t" style="left:567.5px;top:479px;color:#00ff00"><span class="sx" style="transform:scaleX(0.887)">RSNA-CCMP</span></div>
<div class="t" style="left:659.5px;top:479px;color:#00ff00"><span class="sx" style="transform:scaleX(0.900)">216</span></div>
<div class="t" style="left:738.5px;top:479px;color:#00ff00"><span class="sx" style="transform:scaleX(0.899)">Infrastructure</span></div>
<div class="t" style="left:838.5px;top:479px;color:#00ff00"><span class="sx" style="transform:scaleX(0.914)">15:26:08</span></div>
<div class="t" style="left:930.5px;top:479px;color:#00ff00"><span class="sx" style="transform:scaleX(0.914)">15:27:23</span></div>
<div class="t" style="left:1022.5px;top:479px;color:#00ff00"><span class="sx" style="transform:scaleX(0.907)">0,000000</span></div>
<div class="t" style="left:1114.5px;top:479px;color:#00ff00"><span class="sx" style="transform:scaleX(0.907)">0,000000</span></div>
<div class="t" style="left:385px;top:479px;width:20px;text-align:right;color:#ff3a00"><span class="sx" style="transform-origin:100% 50%">-91</span></div>
<div class="a" style="left:23px;top:497px;width:1180px;height:21px;background:#1c1c1c"></div>
<div class="a" style="left:3px;top:497px;width:19px;height:21px;background:#d2b48c"></div>
<svg class="a" style="left:6px;top:501px" width="14" height="14"><rect x="0.5" y="0.5" width="12" height="12" fill="#fff" stroke="#333"/><path d="M2.5 6.5 L5.2 9.2 L10.5 3.5" stroke="#404040" stroke-width="1.4" fill="none"/></svg>
<div class="t" style="left:25px;top:501px;color:#00ff00;font-family:'Liberation Mono', monospace;font-weight:normal;-webkit-text-stroke:0.1px #00ff00;font-size:11px;letter-spacing:0.48px">00:11:32:75:90:35</div>
<div class="t" style="left:155.5px;top:501px;color:#00ff00"><span class="sx" style="transform:scaleX(0.897)">Xtreme50</span></div>
<div class="t" style="left:412.5px;top:501px;color:#00ff00"><span class="sx" style="transform:scaleX(0.900)">36</span></div>
<div class="t" style="left:462.5px;top:501px;color:#00ff00"><span class="sx" style="transform:scaleX(0.906)">Synology Incorpor...</span></div>
<div class="t" style="left:567.5px;top:501px;color:#00ff00"><span class="sx" style="transform:scaleX(0.887)">RSNA-CCMP</span></div>
<div class="t" style="left:659.5px;top:501px;color:#00ff00"><span class="sx" style="transform:scaleX(0.900)">216</span></div>
<div class="t" style="left:738.5px;top:501px;color:#00ff00"><span class="sx" style="transform:scaleX(0.899)">Infrastructure</span></div>
<div class="t" style="left:838.5px;top:501px;color:#00ff00"><span class="sx" style="transform:scaleX(0.914)">15:26:08</span></div>
<div class="t" style="left:930.5px;top:501px;color:#00ff00"><span class="sx" style="transform:scaleX(0.914)">15:27:23</span></div>
<div class="t" style="left:1022.5px;top:501px;color:#00ff00"><span class="sx" style="transform:scaleX(0.907)">0,000000</span></div>
<div class="t" style="left:1114.5px;top:501px;color:#00ff00"><span class="sx" style="transform:scaleX(0.907)">0,000000</span></div>
<div class="t" style="left:385px;top:501px;width:20px;text-align:right;color:#ff3a00"><span class="sx" style="transform-origin:100% 50%">-91</span></div>
<div class="a" style="left:23px;top:519px;width:1180px;height:21px;background:#000"></div>
<div class="a" style="left:3px;top:519px;width:19px;height:21px;background:#808080"></div>
<svg class="a" style="left:6px;top:523px" width="14" height="14"><rect x="0.5" y="0.5" width="12" height="12" fill="#fff" stroke="#333"/><path d="M2.5 6.5 L5.2 9.2 L10.5 3.5" stroke="#404040" stroke-width="1.4" fill="none"/></svg>
<div class="t" style="left:25px;top:523px;color:#00ff00;font-family:'Liberation Mono', monospace;font-weight:normal;-webkit-text-stroke:0.1px #00ff00;font-size:11px;letter-spacing:0.48px">34:2C:C4:70:95:78</div>
<div class="t" style="left:155.5px;top:523px;color:#00ff00"><span class="sx" style="transform:scaleX(0.893)">UPC3972776</span></div>
<div class="t" style="left:412.5px;top:523px;color:#00ff00"><span class="sx" style="transform:scaleX(0.900)">11</span></div>
<div class="t" style="left:567.5px;top:523px;color:#00ff00"><span class="sx" style="transform:scaleX(0.887)">RSNA-CCMP</span></div>
<div class="t" style="left:659.5px;top:523px;color:#00ff00"><span class="sx" style="transform:scaleX(0.911)">144 (N)</span></div>
<div class="t" style="left:738.5px;top:523px;color:#00ff00"><span class="sx" style="transform:scaleX(0.899)">Infrastructure</span></div>
<div class="t" style="left:838.5px;top:523px;color:#00ff00"><span class="sx" style="transform:scaleX(0.914)">15:26:18</span></div>
<div class="t" style="left:930.5px;top:523px;color:#00ff00"><span class="sx" style="transform:scaleX(0.914)">15:27:23</span></div>
<div class="t" style="left:1022.5px;top:523px;color:#00ff00"><span class="sx" style="transform:scaleX(0.907)">0,000000</span></div>
<div class="t" style="left:1114.5px;top:523px;color:#00ff00"><span class="sx" style="transform:scaleX(0.907)">0,000000</span></div>
<div class="t" style="left:385px;top:523px;width:20px;text-align:right;color:#ff5000"><span class="sx" style="transform-origin:100% 50%">-85</span></div>
<div class="a" style="left:23px;top:541px;width:1180px;height:21px;background:#1c1c1c"></div>
<div class="a" style="left:3px;top:541px;width:19px;height:21px;background:#ffc0cb"></div>
<svg class="a" style="left:6px;top:545px" width="14" height="14"><rect x="0.5" y="0.5" width="12" height="12" fill="#fff" stroke="#333"/><path d="M2.5 6.5 L5.2 9.2 L10.5 3.5" stroke="#404040" stroke-width="1.4" fill="none"/></svg>
<div class="t" style="left:25px;top:545px;color:#00ff00;font-family:'Liberation Mono', monospace;font-weight:normal;-webkit-text-stroke:0.1px #00ff00;font-size:11px;letter-spacing:0.48px">1C:5F:2B:70:CF:2C</div>
<div class="t" style="left:155.5px;top:545px;color:#00ff00"><span class="sx" style="transform:scaleX(0.898)">dlink-CF2C</span></div>
<div class="t" style="left:412.5px;top:545px;color:#00ff00"><span class="sx" style="transform:scaleX(0.900)">10</span></div>
<div class="t" style="left:567.5px;top:545px;color:#00ff00"><span class="sx" style="transform:scaleX(0.887)">RSNA-CCMP</span></div>
<div class="t" style="left:659.5px;top:545px;color:#00ff00"><span class="sx" style="transform:scaleX(0.911)">300 (N)</span></div>
<div class="t" style="left:738.5px;top:545px;color:#00ff00"><span class="sx" style="transform:scaleX(0.899)">Infrastructure</span></div>
<div class="t" style="left:838.5px;top:545px;color:#00ff00"><span class="sx" style="transform:scaleX(0.914)">15:26:21</span></div>
<div class="t" style="left:930.5px;top:545px;color:#00ff00"><span class="sx" style="transform:scaleX(0.914)">15:26:28</span></div>
<div class="t" style="left:1022.5px;top:545px;color:#00ff00"><span class="sx" style="transform:scaleX(0.907)">0,000000</span></div>
<div class="t" style="left:1114.5px;top:545px;color:#00ff00"><span class="sx" style="transform:scaleX(0.907)">0,000000</span></div>
<div class="t" style="left:385px;top:545px;width:20px;text-align:right;color:#ff5000"><span class="sx" style="transform-origin:100% 50%">-85</span></div>
<div class="a" style="left:23px;top:563px;width:1180px;height:21px;background:#000"></div>
<div class="a" style="left:3px;top:563px;width:19px;height:21px;background:#800000"></div>
<svg class="a" style="left:6px;top:567px" width="14" height="14"><rect x="0.5" y="0.5" width="12" height="12" fill="#fff" stroke="#333"/><path d="M2.5 6.5 L5.2 9.2 L10.5 3.5" stroke="#404040" stroke-width="1.4" fill="none"/></svg>
<div class="t" style="left:25px;top:567px;color:#00ff00;font-family:'Liberation Mono', monospace;font-weight:normal;-webkit-text-stroke:0.1px #00ff00;font-size:11px;letter-spacing:0.48px">0C:80:63:2F:35:B8</div>
<div class="t" style="left:155.5px;top:567px;color:#00ff00"><span class="sx" style="transform:scaleX(0.894)">Baby staff</span></div>
<div class="t" style="left:412.5px;top:567px;color:#00ff00"><span class="sx" style="transform:scaleX(0.914)">1 + 5</span></div>
<div class="t" style="left:567.5px;top:567px;color:#00ff00"><span class="sx" style="transform:scaleX(0.887)">RSNA-CCMP</span></div>
<div class="t" style="left:659.5px;top:567px;color:#00ff00"><span class="sx" style="transform:scaleX(0.911)">300 (N)</span></div>
<div class="t" style="left:738.5px;top:567px;color:#00ff00"><span class="sx" style="transform:scaleX(0.899)">Infrastructure</span></div>
<div class="t" style="left:838.5px;top:567px;color:#00ff00"><span class="sx" style="transform:scaleX(0.914)">15:26:21</span></div>
<div class="t" style="left:930.5px;top:567px;color:#00ff00"><span class="sx" style="transform:scaleX(0.914)">15:27:23</span></div>
<div class="t" style="left:1022.5px;top:567px;color:#00ff00"><span class="sx" style="transform:scaleX(0.907)">0,000000</span></div>
<div class="t" style="left:1114.5px;top:567px;color:#00ff00"><span class="sx" style="transform:scaleX(0.907)">0,000000</span></div>
<div class="t" style="left:385px;top:567px;width:20px;text-align:right;color:#ff4a00"><span class="sx" style="transform-origin:100% 50%">-87</span></div>
<div class="a" style="left:2px;top:100px;width:1201px;height:1px;background:#3c3c3c"></div>
<div class="a" style="left:2px;top:122px;width:1201px;height:1px;background:#3c3c3c"></div>
<div class="a" style="left:2px;top:144px;width:1201px;height:1px;background:#3c3c3c"></div>
<div class="a" style="left:2px;top:166px;width:1201px;height:1px;background:#3c3c3c"></div>
<div class="a" style="left:2px;top:188px;width:1201px;height:1px;background:#3c3c3c"></div>
<div class="a" style="left:2px;top:210px;width:1201px;height:1px;background:#3c3c3c"></div>
<div class="a" style="left:2px;top:232px;width:1201px;height:1px;background:#3c3c3c"></div>
<div class="a" style="left:2px;top:254px;width:1201px;height:1px;background:#3c3c3c"></div>
<div class="a" style="left:2px;top:276px;width:1201px;height:1px;background:#3c3c3c"></div>
<div class="a" style="left:2px;top:298px;width:1201px;height:1px;background:#3c3c3c"></div>
<div class="a" style="left:2px;top:320px;width:1201px;height:1px;background:#3c3c3c"></div>
<div class="a" style="left:2px;top:342px;width:1201px;height:1px;background:#3c3c3c"></div>
<div class="a" style="left:2px;top:364px;width:1201px;height:1px;background:#3c3c3c"></div>
<div class="a" style="left:2px;top:386px;width:1201px;height:1px;background:#3c3c3c"></div>
<div class="a" style="left:2px;top:408px;width:1201px;height:1px;background:#3c3c3c"></div>
<div class="a" style="left:2px;top:430px;width:1201px;height:1px;background:#3c3c3c"></div>
<div class="a" style="left:2px;top:452px;width:1201px;height:1px;background:#3c3c3c"></div>
<div class="a" style="left:2px;top:474px;width:1201px;height:1px;background:#3c3c3c"></div>
<div class="a" style="left:2px;top:496px;width:1201px;height:1px;background:#3c3c3c"></div>
<div class="a" style="left:2px;top:518px;width:1201px;height:1px;background:#3c3c3c"></div>
<div class="a" style="left:2px;top:540px;width:1201px;height:1px;background:#3c3c3c"></div>
<div class="a" style="left:2px;top:562px;width:1201px;height:1px;background:#3c3c3c"></div>
<div class="a" style="left:2px;top:584px;width:1201px;height:1px;background:#3c3c3c"></div>
<div class="a" style="left:2px;top:78px;width:1201px;height:1px;background:#3c3c3c"></div>
<div class="a" style="left:2px;top:57px;width:1px;height:523px;background:#3c3c3c"></div>
<div class="a" style="left:22px;top:57px;width:1px;height:523px;background:#3c3c3c"></div>
<div class="a" style="left:152px;top:57px;width:1px;height:523px;background:#3c3c3c"></div>
<div class="a" style="left:327px;top:57px;width:1px;height:523px;background:#3c3c3c"></div>
<div class="a" style="left:409px;top:57px;width:1px;height:523px;background:#3c3c3c"></div>
<div class="a" style="left:459px;top:57px;width:1px;height:523px;background:#3c3c3c"></div>
<div class="a" style="left:564px;top:57px;width:1px;height:523px;background:#3c3c3c"></div>
<div class="a" style="left:656px;top:57px;width:1px;height:523px;background:#3c3c3c"></div>
<div class="a" style="left:735px;top:57px;width:1px;height:523px;background:#3c3c3c"></div>
<div class="a" style="left:835px;top:57px;width:1px;height:523px;background:#3c3c3c"></div>
<div class="a" style="left:927px;top:57px;width:1px;height:523px;background:#3c3c3c"></div>
<div class="a" style="left:1019px;top:57px;width:1px;height:523px;background:#3c3c3c"></div>
<div class="a" style="left:1111px;top:57px;width:1px;height:523px;background:#3c3c3c"></div>
<div class="a" style="left:1203px;top:57px;width:1px;height:523px;background:#3c3c3c"></div>
<svg class="a" style="left:0;top:0" width="1223" height="580" shape-rendering="crispEdges"><rect x="332" y="95" width="7" height="1" fill="#ff6a00"/><rect x="339" y="95" width="8" height="1" fill="#ff6a00"/><rect x="347" y="96" width="10" height="1" fill="#ff5c00"/><rect x="357" y="95" width="7" height="1" fill="#ff6000"/><rect x="364" y="95" width="10" height="1" fill="#ff6000"/><rect x="374" y="96" width="5" height="1" fill="#ff5400"/><rect x="379" y="95" width="1" height="1" fill="#ff6000"/><rect x="380" y="96" width="3" height="1" fill="#fff"/><rect x="332" y="119" width="8" height="1" fill="#ff4d00"/><rect x="340" y="119" width="9" height="1" fill="#ff4d00"/><rect x="349" y="119" width="6" height="1" fill="#ff4d00"/><rect x="355" y="119" width="5" height="1" fill="#ff4d00"/><rect x="360" y="119" width="8" height="1" fill="#ff4d00"/><rect x="368" y="119" width="7" height="1" fill="#ff4d00"/><rect x="375" y="119" width="5" height="1" fill="#ff4d00"/><rect x="380" y="119" width="3" height="1" fill="#fff"/><rect x="332" y="140" width="5" height="1" fill="#ff5000"/><rect x="337" y="140" width="9" height="1" fill="#ff5000"/><rect x="346" y="140" width="5" height="1" fill="#ff5000"/><rect x="351" y="140" width="9" height="1" fill="#ff5000"/><rect x="360" y="140" width="8" height="1" fill="#ff5000"/><rect x="368" y="140" width="8" height="1" fill="#ff5000"/><rect x="376" y="140" width="4" height="1" fill="#ff5000"/><rect x="380" y="140" width="3" height="1" fill="#fff"/><rect x="332" y="163" width="13" height="1" fill="#ff5000"/><rect x="345" y="163" width="12" height="1" fill="#ff5000"/><rect x="357" y="162" width="14" height="1" fill="#ff5800"/><rect x="371" y="163" width="8" height="1" fill="#ff5000"/><rect x="379" y="163" width="1" height="1" fill="#ff5000"/><rect x="380" y="162" width="3" height="1" fill="#fff"/><rect x="332" y="183" width="6" height="1" fill="#ff7a00"/><rect x="338" y="180" width="10" height="1" fill="#ffbf00"/><rect x="348" y="181" width="10" height="1" fill="#ff9900"/><rect x="358" y="181" width="11" height="1" fill="#ffa200"/><rect x="369" y="178" width="7" height="1" fill="#ffe800"/><rect x="376" y="182" width="3" height="1" fill="#ff8500"/><rect x="379" y="180" width="1" height="1" fill="#ffac00"/><rect x="380" y="181" width="3" height="1" fill="#fff"/><rect x="332" y="204" width="5" height="1" fill="#ff6f00"/><rect x="337" y="206" width="2" height="1" fill="#ff5c00"/><rect x="339" y="206" width="4" height="1" fill="#ff5800"/><rect x="343" y="207" width="4" height="1" fill="#ff4d00"/><rect x="347" y="207" width="2" height="1" fill="#ff5000"/><rect x="349" y="207" width="5" height="1" fill="#ff5000"/><rect x="354" y="205" width="4" height="1" fill="#ff6400"/><rect x="358" y="207" width="2" height="1" fill="#ff4d00"/><rect x="360" y="206" width="2" height="1" fill="#ff5800"/><rect x="362" y="207" width="3" height="1" fill="#ff4d00"/><rect x="365" y="205" width="5" height="1" fill="#ff6400"/><rect x="370" y="205" width="5" height="1" fill="#ff6400"/><rect x="375" y="206" width="2" height="1" fill="#ff5800"/><rect x="377" y="205" width="3" height="1" fill="#ff6000"/><rect x="380" y="205" width="3" height="1" fill="#fff"/><rect x="332" y="228" width="3" height="1" fill="#ff5c00"/><rect x="335" y="229" width="5" height="1" fill="#ff4d00"/><rect x="340" y="229" width="6" height="1" fill="#ff5000"/><rect x="346" y="228" width="4" height="1" fill="#ff5800"/><rect x="350" y="229" width="8" height="1" fill="#ff5000"/><rect x="358" y="229" width="3" height="1" fill="#ff4d00"/><rect x="361" y="227" width="6" height="1" fill="#ff6a00"/><rect x="367" y="226" width="4" height="1" fill="#ff6f00"/><rect x="371" y="227" width="4" height="1" fill="#ff6a00"/><rect x="375" y="228" width="5" height="1" fill="#ff5800"/><rect x="380" y="227" width="3" height="1" fill="#fff"/><rect x="332" y="247" width="3" height="1" fill="#ff9400"/><rect x="335" y="249" width="5" height="1" fill="#ff7a00"/><rect x="340" y="247" width="5" height="1" fill="#ff9400"/><rect x="345" y="249" width="3" height="1" fill="#ff7500"/><rect x="348" y="246" width="4" height="1" fill="#ffac00"/><rect x="352" y="249" width="4" height="1" fill="#ff7500"/><rect x="356" y="248" width="3" height="1" fill="#ff8000"/><rect x="359" y="246" width="5" height="1" fill="#ffac00"/><rect x="364" y="249" width="2" height="1" fill="#ff7500"/><rect x="366" y="248" width="3" height="1" fill="#ff8500"/><rect x="369" y="248" width="5" height="1" fill="#ff8a00"/><rect x="374" y="246" width="2" height="1" fill="#ffac00"/><rect x="376" y="248" width="4" height="1" fill="#ff8a00"/><rect x="380" y="249" width="3" height="1" fill="#fff"/><rect x="332" y="272" width="3" height="1" fill="#ff5800"/><rect x="335" y="272" width="2" height="1" fill="#ff5800"/><rect x="337" y="270" width="2" height="1" fill="#ff8000"/><rect x="339" y="272" width="4" height="1" fill="#ff6000"/><rect x="343" y="270" width="2" height="1" fill="#ff8000"/><rect x="345" y="271" width="3" height="1" fill="#ff6a00"/><rect x="348" y="270" width="4" height="1" fill="#ff7500"/><rect x="352" y="270" width="2" height="1" fill="#ff8000"/><rect x="354" y="270" width="3" height="1" fill="#ff8000"/><rect x="357" y="271" width="2" height="1" fill="#ff6f00"/><rect x="359" y="269" width="2" height="1" fill="#ff8500"/><rect x="361" y="271" width="2" height="1" fill="#ff6400"/><rect x="363" y="270" width="2" height="1" fill="#ff8000"/><rect x="365" y="269" width="2" height="1" fill="#ff8a00"/><rect x="367" y="272" width="2" height="1" fill="#ff5c00"/><rect x="369" y="269" width="4" height="1" fill="#ff8500"/><rect x="373" y="272" width="4" height="1" fill="#ff6000"/><rect x="377" y="271" width="3" height="1" fill="#ff6f00"/><rect x="380" y="272" width="3" height="1" fill="#fff"/><rect x="332" y="295" width="3" height="1" fill="#ff5000"/><rect x="335" y="295" width="3" height="1" fill="#ff4d00"/><rect x="338" y="295" width="2" height="1" fill="#ff5000"/><rect x="340" y="292" width="2" height="1" fill="#ff6f00"/><rect x="342" y="294" width="3" height="1" fill="#ff5800"/><rect x="345" y="294" width="3" height="1" fill="#ff5c00"/><rect x="348" y="293" width="3" height="1" fill="#ff6a00"/><rect x="351" y="292" width="3" height="1" fill="#ff6f00"/><rect x="354" y="295" width="2" height="1" fill="#ff5000"/><rect x="356" y="294" width="2" height="1" fill="#ff5800"/><rect x="358" y="292" width="3" height="1" fill="#ff6f00"/><rect x="361" y="294" width="2" height="1" fill="#ff5c00"/><rect x="363" y="294" width="2" height="1" fill="#ff5800"/><rect x="365" y="295" width="2" height="1" fill="#ff5000"/><rect x="367" y="293" width="3" height="1" fill="#ff6400"/><rect x="370" y="294" width="3" height="1" fill="#ff5800"/><rect x="373" y="295" width="2" height="1" fill="#ff4d00"/><rect x="375" y="294" width="2" height="1" fill="#ff5c00"/><rect x="377" y="292" width="3" height="1" fill="#ff6f00"/><rect x="380" y="291" width="3" height="1" fill="#fff"/><rect x="332" y="316" width="4" height="1" fill="#ff5400"/><rect x="336" y="315" width="2" height="1" fill="#ff6000"/><rect x="338" y="315" width="2" height="1" fill="#ff6a00"/><rect x="340" y="314" width="3" height="1" fill="#ff6f00"/><rect x="343" y="316" width="4" height="1" fill="#ff5400"/><rect x="347" y="317" width="4" height="1" fill="#ff4d00"/><rect x="351" y="315" width="2" height="1" fill="#ff6a00"/><rect x="353" y="316" width="3" height="1" fill="#ff5c00"/><rect x="356" y="317" width="2" height="1" fill="#ff4d00"/><rect x="358" y="317" width="4" height="1" fill="#ff5000"/><rect x="362" y="317" width="3" height="1" fill="#ff5000"/><rect x="365" y="316" width="4" height="1" fill="#ff5c00"/><rect x="369" y="316" width="3" height="1" fill="#ff5400"/><rect x="372" y="317" width="2" height="1" fill="#ff5000"/><rect x="374" y="314" width="3" height="1" fill="#ff6f00"/><rect x="377" y="317" width="3" height="1" fill="#ff4d00"/><rect x="380" y="315" width="3" height="1" fill="#fff"/><rect x="332" y="338" width="4" height="1" fill="#ff5400"/><rect x="336" y="339" width="5" height="1" fill="#ff4d00"/><rect x="341" y="339" width="6" height="1" fill="#ff4d00"/><rect x="347" y="339" width="6" height="1" fill="#ff4d00"/><rect x="353" y="338" width="6" height="1" fill="#ff5c00"/><rect x="359" y="338" width="3" height="1" fill="#ff5c00"/><rect x="362" y="338" width="6" height="1" fill="#ff5800"/><rect x="368" y="338" width="3" height="1" fill="#ff5c00"/><rect x="371" y="339" width="3" height="1" fill="#ff4d00"/><rect x="374" y="339" width="3" height="1" fill="#ff4d00"/><rect x="377" y="338" width="3" height="1" fill="#ff5800"/><rect x="380" y="338" width="3" height="1" fill="#fff"/><rect x="332" y="357" width="4" height="1" fill="#ff9900"/><rect x="336" y="355" width="3" height="1" fill="#ffbf00"/><rect x="339" y="355" width="3" height="1" fill="#ffbf00"/><rect x="342" y="359" width="4" height="1" fill="#ff6f00"/><rect x="346" y="354" width="4" height="1" fill="#ffd000"/><rect x="350" y="357" width="2" height="1" fill="#ff9400"/><rect x="352" y="359" width="4" height="1" fill="#ff6f00"/><rect x="356" y="360" width="3" height="1" fill="#ff6400"/><rect x="359" y="359" width="2" height="1" fill="#ff7500"/><rect x="361" y="355" width="3" height="1" fill="#ffc800"/><rect x="364" y="360" width="3" height="1" fill="#ff6400"/><rect x="367" y="357" width="3" height="1" fill="#ff9400"/><rect x="370" y="358" width="2" height="1" fill="#ff8500"/><rect x="372" y="358" width="4" height="1" fill="#ff8000"/><rect x="376" y="355" width="3" height="1" fill="#ffbf00"/><rect x="379" y="358" width="1" height="1" fill="#ff8a00"/><rect x="380" y="357" width="3" height="1" fill="#fff"/><rect x="332" y="377" width="3" height="1" fill="#ffe000"/><rect x="335" y="377" width="4" height="1" fill="#ffd800"/><rect x="339" y="376" width="2" height="1" fill="#fff000"/><rect x="341" y="376" width="3" height="1" fill="#eff006"/><rect x="344" y="377" width="2" height="1" fill="#ffd000"/><rect x="346" y="377" width="3" height="1" fill="#ffd000"/><rect x="349" y="377" width="4" height="1" fill="#ffd800"/><rect x="353" y="377" width="2" height="1" fill="#ffd000"/><rect x="355" y="377" width="2" height="1" fill="#ffe000"/><rect x="357" y="376" width="3" height="1" fill="#eff006"/><rect x="360" y="376" width="2" height="1" fill="#fff000"/><rect x="362" y="377" width="2" height="1" fill="#ffd800"/><rect x="364" y="378" width="2" height="1" fill="#ffc800"/><rect x="366" y="377" width="3" height="1" fill="#ffe000"/><rect x="369" y="377" width="3" height="1" fill="#ffd000"/><rect x="372" y="377" width="3" height="1" fill="#ffe000"/><rect x="375" y="376" width="4" height="1" fill="#ffe800"/><rect x="379" y="376" width="1" height="1" fill="#fff000"/><rect x="380" y="376" width="3" height="1" fill="#fff"/><rect x="332" y="397" width="7" height="1" fill="#b0f020"/><rect x="339" y="397" width="9" height="1" fill="#b0f020"/><rect x="348" y="397" width="8" height="1" fill="#b0f020"/><rect x="356" y="397" width="7" height="1" fill="#b0f020"/><rect x="363" y="397" width="5" height="1" fill="#b0f020"/><rect x="368" y="397" width="5" height="1" fill="#b0f020"/><rect x="373" y="397" width="7" height="1" fill="#b0f020"/><rect x="380" y="397" width="3" height="1" fill="#fff"/><rect x="332" y="425" width="4" height="1" fill="#ff7500"/><rect x="336" y="424" width="4" height="1" fill="#ff8a00"/><rect x="340" y="423" width="4" height="1" fill="#ff8f00"/><rect x="344" y="422" width="3" height="1" fill="#ffb500"/><rect x="347" y="425" width="4" height="1" fill="#ff7500"/><rect x="351" y="424" width="4" height="1" fill="#ff8000"/><rect x="355" y="423" width="3" height="1" fill="#ff9900"/><rect x="358" y="425" width="2" height="1" fill="#ff7500"/><rect x="360" y="424" width="3" height="1" fill="#ff8500"/><rect x="363" y="425" width="2" height="1" fill="#ff7500"/><rect x="365" y="425" width="4" height="1" fill="#ff7a00"/><rect x="369" y="425" width="3" height="1" fill="#ff7a00"/><rect x="372" y="422" width="4" height="1" fill="#ffa200"/><rect x="376" y="422" width="4" height="1" fill="#ffb500"/><rect x="380" y="422" width="3" height="1" fill="#fff"/><rect x="332" y="448" width="3" height="1" fill="#ff6000"/><rect x="335" y="447" width="4" height="1" fill="#ff6a00"/><rect x="339" y="446" width="2" height="1" fill="#ff8000"/><rect x="341" y="448" width="3" height="1" fill="#ff6400"/><rect x="344" y="448" width="4" height="1" fill="#ff5c00"/><rect x="348" y="446" width="3" height="1" fill="#ff8500"/><rect x="351" y="448" width="4" height="1" fill="#ff5c00"/><rect x="355" y="447" width="2" height="1" fill="#ff6a00"/><rect x="357" y="444" width="3" height="1" fill="#ff9900"/><rect x="360" y="446" width="3" height="1" fill="#ff8500"/><rect x="363" y="446" width="4" height="1" fill="#ff8500"/><rect x="367" y="445" width="4" height="1" fill="#ff8a00"/><rect x="371" y="446" width="2" height="1" fill="#ff7a00"/><rect x="373" y="447" width="4" height="1" fill="#ff6a00"/><rect x="377" y="446" width="2" height="1" fill="#ff7a00"/><rect x="379" y="446" width="1" height="1" fill="#ff7a00"/><rect x="380" y="447" width="3" height="1" fill="#fff"/><rect x="332" y="470" width="6" height="1" fill="#ff5800"/><rect x="338" y="470" width="8" height="1" fill="#ff5800"/><rect x="346" y="470" width="8" height="1" fill="#ff5800"/><rect x="354" y="470" width="6" height="1" fill="#ff5800"/><rect x="360" y="470" width="5" height="1" fill="#ff5800"/><rect x="365" y="470" width="8" height="1" fill="#ff5800"/><rect x="373" y="470" width="7" height="1" fill="#ff5800"/><rect x="380" y="470" width="3" height="1" fill="#fff"/><rect x="332" y="493" width="8" height="1" fill="#ff4300"/><rect x="340" y="494" width="10" height="1" fill="#ff3a00"/><rect x="350" y="494" width="7" height="1" fill="#ff3a00"/><rect x="357" y="494" width="9" height="1" fill="#ff3300"/><rect x="366" y="495" width="4" height="1" fill="#ff2d00"/><rect x="370" y="494" width="5" height="1" fill="#ff3300"/><rect x="375" y="495" width="5" height="1" fill="#ff2d00"/><rect x="380" y="494" width="3" height="1" fill="#fff"/><rect x="332" y="515" width="6" height="1" fill="#ff4300"/><rect x="338" y="516" width="10" height="1" fill="#ff3a00"/><rect x="348" y="517" width="6" height="1" fill="#ff2d00"/><rect x="354" y="515" width="6" height="1" fill="#ff4300"/><rect x="360" y="517" width="4" height="1" fill="#ff2d00"/><rect x="364" y="516" width="7" height="1" fill="#ff3a00"/><rect x="371" y="516" width="8" height="1" fill="#ff4000"/><rect x="379" y="516" width="1" height="1" fill="#ff3a00"/><rect x="380" y="516" width="3" height="1" fill="#fff"/><rect x="332" y="537" width="7" height="1" fill="#ff4a00"/><rect x="339" y="537" width="5" height="1" fill="#ff4a00"/><rect x="344" y="537" width="7" height="1" fill="#ff4a00"/><rect x="351" y="536" width="5" height="1" fill="#ff5800"/><rect x="356" y="537" width="6" height="1" fill="#ff4d00"/><rect x="362" y="537" width="7" height="1" fill="#ff4d00"/><rect x="369" y="536" width="8" height="1" fill="#ff5800"/><rect x="377" y="536" width="3" height="1" fill="#ff5400"/><rect x="380" y="536" width="3" height="1" fill="#fff"/><rect x="332" y="558" width="8" height="1" fill="#ff5000"/><rect x="340" y="558" width="9" height="1" fill="#ff5000"/><rect x="349" y="558" width="5" height="1" fill="#ff5000"/><rect x="354" y="558" width="6" height="1" fill="#ff5000"/><rect x="360" y="558" width="8" height="1" fill="#ff5000"/><rect x="368" y="558" width="9" height="1" fill="#ff5000"/><rect x="377" y="558" width="3" height="1" fill="#ff5000"/><rect x="380" y="558" width="3" height="1" fill="#fff"/><rect x="332" y="580" width="6" height="1" fill="#ff5000"/><rect x="338" y="581" width="9" height="1" fill="#ff4600"/><rect x="347" y="580" width="8" height="1" fill="#ff5000"/><rect x="355" y="580" width="10" height="1" fill="#ff5000"/><rect x="365" y="581" width="6" height="1" fill="#ff4a00"/><rect x="371" y="581" width="9" height="1" fill="#ff4d00"/><rect x="380" y="581" width="3" height="1" fill="#fff"/></svg>
<div class="a" style="left:1204px;top:56px;width:17px;height:524px;background:#f0f0f0;border-left:1px solid #fff;border-top:1px solid #fff"></div>
<div class="a" style="left:1205px;top:73px;width:15px;height:413px;background:#cdcdcd"></div>
<svg class="a" style="left:1205px;top:57px" width="16" height="16"><path d="M4.3 10.3 L7.8 6 L11.3 10.3" stroke="#555" stroke-width="2.1" fill="none"/></svg>
<svg class="a" style="left:1205px;top:563px" width="16" height="16"><path d="M4.3 6 L7.8 10.3 L11.3 6" stroke="#555" stroke-width="2.1" fill="none"/></svg>
<div class="a" style="left:2px;top:580px;width:1220px;height:29px;background:#000"></div>
<div class="a" style="left:2px;top:582px;width:1218px;height:1px;background:repeating-linear-gradient(90deg,#fff 0 1px,transparent 1px 2px)"></div>
<div class="a" style="left:2px;top:586px;width:1218px;height:1px;background:repeating-linear-gradient(90deg,#fff 0 1px,transparent 1px 2px)"></div>
<div class="a" style="left:2px;top:584px;width:1px;height:1px;background:#fff"></div>
<div class="a" style="left:1220px;top:584px;width:1px;height:1px;background:#fff"></div>
<div class="a" style="left:3px;top:590px;width:42px;height:19px;background:#f0f0f0;border:1px solid #d9d9d9;border-bottom:none"></div>
<div class="t" style="left:9px;top:593px;color:#111"><span class="sx" style="transform:scaleX(0.894)">News</span></div>
<div class="a" style="left:44px;top:590px;width:67px;height:19px;background:#f0f0f0;border:1px solid #d9d9d9;border-bottom:none"></div>
<div class="t" style="left:50px;top:593px;color:#111"><span class="sx" style="transform:scaleX(0.892)">Time Graph</span></div>
<div class="a" style="left:211px;top:590px;width:88px;height:19px;background:#f0f0f0;border:1px solid #d9d9d9;border-bottom:none"></div>
<div class="t" style="left:217px;top:593px;color:#111"><span class="sx" style="transform:scaleX(0.890)">5 GHz Channels</span></div>
<div class="a" style="left:298px;top:590px;width:43px;height:19px;background:#f0f0f0;border:1px solid #d9d9d9;border-bottom:none"></div>
<div class="t" style="left:304px;top:593px;color:#111"><span class="sx" style="transform:scaleX(0.896)">Filters</span></div>
<div class="a" style="left:340px;top:590px;width:42px;height:19px;background:#f0f0f0;border:1px solid #d9d9d9;border-bottom:none"></div>
<div class="t" style="left:346px;top:593px;color:#111"><span class="sx" style="transform:scaleX(0.880)">GPS</span></div>
<div class="a" style="left:1px;top:608px;width:1221px;height:2px;background:#fff"></div>
<div class="a" style="left:110px;top:588px;width:102px;height:22px;background:#fff;border:1px solid #d9d9d9;border-bottom:none"></div>
<div class="t" style="left:116px;top:591px;color:#111"><span class="sx">2.4 GHz Channels</span></div>
<div class="a" style="left:1px;top:608px;width:1221px;height:410px;background:#fff"></div>
<div class="a" style="left:5px;top:610px;width:1213px;height:403px;background:#000"></div>
<div class="a" style="left:1px;top:1017px;width:1221px;height:1px;background:#d8d8d8"></div>
<div class="a" style="left:1px;top:1018px;width:1221px;height:21px;background:#f0f0f0"></div>
<div class="t" style="left:4px;top:1022px;color:#111;font-size:13px"><span class="sx" style="transform:scaleX(.97)">27 / 27 AP(s)</span></div>
<div class="t" style="left:105px;top:1022px;color:#111;font-size:13px"><span class="sx" style="transform:scaleX(.87)">GPS: Off</span></div>
<div class="t" style="left:546px;top:1022px;color:#111;font-size:13px"><span class="sx" style="transform:scaleX(.98)">Logging: Off</span></div>
<svg class="a" style="left:1205px;top:1025px" width="14" height="12"><g fill="#8a8a8a"><rect x="8" y="0" width="2" height="2"/><rect x="4" y="4" width="2" height="2"/><rect x="8" y="4" width="2" height="2"/><rect x="0" y="8" width="2" height="2"/><rect x="4" y="8" width="2" height="2"/><rect x="8" y="8" width="2" height="2"/></g></svg>
<svg class="a" style="left:0;top:0;font-family:'Liberation Sans', sans-serif" width="1223" height="1040"><line x1="63" y1="645.5" x2="1198" y2="645.5" stroke="#4a4a4a" stroke-dasharray="1 1"/><line x1="57" y1="645.5" x2="62" y2="645.5" stroke="#d8d8d8"/><text x="54" y="647.8" text-anchor="end" fill="#32cd32" font-size="12">-15</text><line x1="63" y1="665.5" x2="1198" y2="665.5" stroke="#4a4a4a" stroke-dasharray="1 1"/><line x1="57" y1="665.5" x2="62" y2="665.5" stroke="#d8d8d8"/><text x="54" y="667.8" text-anchor="end" fill="#32cd32" font-size="12">-20</text><line x1="63" y1="686.5" x2="1198" y2="686.5" stroke="#4a4a4a" stroke-dasharray="1 1"/><line x1="57" y1="686.5" x2="62" y2="686.5" stroke="#d8d8d8"/><text x="54" y="688.8" text-anchor="end" fill="#32cd32" font-size="12">-25</text><line x1="63" y1="706.5" x2="1198" y2="706.5" stroke="#4a4a4a" stroke-dasharray="1 1"/><line x1="57" y1="706.5" x2="62" y2="706.5" stroke="#d8d8d8"/><text x="54" y="708.8" text-anchor="end" fill="#32cd32" font-size="12">-30</text><line x1="63" y1="727.5" x2="1198" y2="727.5" stroke="#4a4a4a" stroke-dasharray="1 1"/><line x1="57" y1="727.5" x2="62" y2="727.5" stroke="#d8d8d8"/><text x="54" y="729.8" text-anchor="end" fill="#32cd32" font-size="12">-35</text><line x1="63" y1="747.5" x2="1198" y2="747.5" stroke="#4a4a4a" stroke-dasharray="1 1"/><line x1="57" y1="747.5" x2="62" y2="747.5" stroke="#d8d8d8"/><text x="54" y="749.8" text-anchor="end" fill="#32cd32" font-size="12">-40</text><line x1="63" y1="768.5" x2="1198" y2="768.5" stroke="#4a4a4a" stroke-dasharray="1 1"/><line x1="57" y1="768.5" x2="62" y2="768.5" stroke="#d8d8d8"/><text x="54" y="770.8" text-anchor="end" fill="#32cd32" font-size="12">-45</text><line x1="63" y1="788.5" x2="1198" y2="788.5" stroke="#4a4a4a" stroke-dasharray="1 1"/><line x1="57" y1="788.5" x2="62" y2="788.5" stroke="#d8d8d8"/><text x="54" y="790.8" text-anchor="end" fill="#32cd32" font-size="12">-50</text><line x1="63" y1="809.5" x2="1198" y2="809.5" stroke="#4a4a4a" stroke-dasharray="1 1"/><line x1="57" y1="809.5" x2="62" y2="809.5" stroke="#d8d8d8"/><text x="54" y="811.8" text-anchor="end" fill="#b0f020" font-size="12">-55</text><line x1="63" y1="829.5" x2="1198" y2="829.5" stroke="#4a4a4a" stroke-dasharray="1 1"/><line x1="57" y1="829.5" x2="62" y2="829.5" stroke="#d8d8d8"/><text x="54" y="831.8" text-anchor="end" fill="#fff000" font-size="12">-60</text><line x1="63" y1="850.5" x2="1198" y2="850.5" stroke="#4a4a4a" stroke-dasharray="1 1"/><line x1="57" y1="850.5" x2="62" y2="850.5" stroke="#d8d8d8"/><text x="54" y="852.8" text-anchor="end" fill="#ffc800" font-size="12">-65</text><line x1="63" y1="870.5" x2="1198" y2="870.5" stroke="#4a4a4a" stroke-dasharray="1 1"/><line x1="57" y1="870.5" x2="62" y2="870.5" stroke="#d8d8d8"/><text x="54" y="872.8" text-anchor="end" fill="#ff9900" font-size="12">-70</text><line x1="63" y1="891.5" x2="1198" y2="891.5" stroke="#4a4a4a" stroke-dasharray="1 1"/><line x1="57" y1="891.5" x2="62" y2="891.5" stroke="#d8d8d8"/><text x="54" y="893.8" text-anchor="end" fill="#ff8000" font-size="12">-75</text><line x1="63" y1="911.5" x2="1198" y2="911.5" stroke="#4a4a4a" stroke-dasharray="1 1"/><line x1="57" y1="911.5" x2="62" y2="911.5" stroke="#d8d8d8"/><text x="54" y="913.8" text-anchor="end" fill="#ff6400" font-size="12">-80</text><line x1="63" y1="932.5" x2="1198" y2="932.5" stroke="#4a4a4a" stroke-dasharray="1 1"/><line x1="57" y1="932.5" x2="62" y2="932.5" stroke="#d8d8d8"/><text x="54" y="934.8" text-anchor="end" fill="#ff5000" font-size="12">-85</text><line x1="63" y1="952.5" x2="1198" y2="952.5" stroke="#4a4a4a" stroke-dasharray="1 1"/><line x1="57" y1="952.5" x2="62" y2="952.5" stroke="#d8d8d8"/><text x="54" y="954.8" text-anchor="end" fill="#ff4000" font-size="12">-90</text><line x1="63" y1="973.5" x2="1198" y2="973.5" stroke="#4a4a4a" stroke-dasharray="1 1"/><line x1="57" y1="973.5" x2="62" y2="973.5" stroke="#d8d8d8"/><text x="54" y="975.8" text-anchor="end" fill="#ff2000" font-size="12">-95</text><line x1="57" y1="993.5" x2="62" y2="993.5" stroke="#d8d8d8"/><text x="54" y="995.8" text-anchor="end" fill="#ff0000" font-size="12">-100</text><rect x="59.5" y="619.5" width="1139" height="374" fill="none" stroke="#707070"/><text x="208.95" y="1008" text-anchor="middle" fill="#00ee00" font-size="12">1</text><text x="268.15000000000003" y="1008" text-anchor="middle" fill="#00ee00" font-size="12">2</text><text x="327.35" y="1008" text-anchor="middle" fill="#00ee00" font-size="12">3</text><text x="386.55000000000007" y="1008" text-anchor="middle" fill="#00ee00" font-size="12">4</text><text x="445.75" y="1008" text-anchor="middle" fill="#00ee00" font-size="12">5</text><text x="504.95000000000005" y="1008" text-anchor="middle" fill="#00ee00" font-size="12">6</text><text x="564.1500000000001" y="1008" text-anchor="middle" fill="#00ee00" font-size="12">7</text><text x="623.35" y="1008" text-anchor="middle" fill="#00ee00" font-size="12">8</text><text x="682.5500000000001" y="1008" text-anchor="middle" fill="#00ee00" font-size="12">9</text><text x="741.7500000000001" y="1008" text-anchor="middle" fill="#00ee00" font-size="12">10</text><text x="800.95" y="1008" text-anchor="middle" fill="#00ee00" font-size="12">11</text><text x="860.1500000000001" y="1008" text-anchor="middle" fill="#00ee00" font-size="12">12</text><text x="919.3500000000001" y="1008" text-anchor="middle" fill="#00ee00" font-size="12">13</text><text x="1061.4299999999998" y="1008" text-anchor="middle" fill="#00ee00" font-size="12">14</text><text transform="translate(24,843.5) rotate(-90)" fill="#00e000" font-size="12" textLength="69" lengthAdjust="spacingAndGlyphs">Amplitude [dB]</text><path d="M320.8,993.5 Q332.8,978.6 339.0,956.2 L339.0,919.0 L540.0,919.0 L540.0,956.2 Q545.5,978.6 557.5,993.5" stroke="#ff0000" stroke-width="2" fill="none" shape-rendering="crispEdges"/><text x="427.2" y="914.0" fill="#ff0000" font-size="12" textLength="23.6" lengthAdjust="spacingAndGlyphs">Aera</text><path d="M380.0,993.5 Q392.0,977.8 398.0,954.2 L398.0,915.0 L599.0,915.0 L599.0,954.2 Q604.8,977.8 616.8,993.5" stroke="#ffa500" stroke-width="2" fill="none" shape-rendering="crispEdges"/><text x="482.8" y="911.0" fill="#ffa500" font-size="12" textLength="30.4" lengthAdjust="spacingAndGlyphs">Tenda</text><path d="M83.9,993.5 Q95.9,969.6 102.0,933.8 L102.0,874.0 L303.0,874.0 L303.0,933.8 Q308.8,969.6 320.8,993.5" stroke="#d2b48c" stroke-width="2" fill="none" shape-rendering="crispEdges"/><text x="176.9" y="869.0" fill="#d2b48c" font-size="12" textLength="50.3" lengthAdjust="spacingAndGlyphs">Dostal net</text><path d="M557.6,993.5 Q569.6,977.0 576.0,952.2 L576.0,911.0 L777.0,911.0 L777.0,952.2 Q782.4,977.0 794.4,993.5" stroke="#808080" stroke-width="2" fill="none" shape-rendering="crispEdges"/><text x="653.7" y="906.0" fill="#808080" font-size="12" textLength="44.7" lengthAdjust="spacingAndGlyphs">oTc NExt</text><path d="M83.9,993.5 Q95.9,977.0 102.0,952.2 L102.0,911.0 L540.0,911.0 L540.0,952.2 Q545.5,977.0 557.5,993.5" stroke="#ffc0cb" stroke-width="2" fill="none" shape-rendering="crispEdges"/><text x="302.4" y="906.0" fill="#ffc0cb" font-size="12" textLength="37.2" lengthAdjust="spacingAndGlyphs">Zdenny</text><path d="M83.9,993.5 Q95.9,977.0 102.0,952.2 L102.0,911.0 L540.0,911.0 L540.0,952.2 Q545.5,977.0 557.5,993.5" stroke="#800000" stroke-width="2" fill="none" shape-rendering="crispEdges"/><text x="297.4" y="906.0" fill="#800000" font-size="12" textLength="47.2" lengthAdjust="spacingAndGlyphs">Xguest24</text><path d="M676.0,993.5 Q688.0,977.8 694.0,954.2 L694.0,915.0 L895.0,915.0 L895.0,954.2 Q900.8,977.8 912.8,993.5" stroke="#fa8072" stroke-width="2" fill="none" shape-rendering="crispEdges"/><text x="778.8" y="910.0" fill="#fa8072" font-size="12" textLength="30.4" lengthAdjust="spacingAndGlyphs">Lenka</text><path d="M83.9,993.5 Q95.9,969.6 102.0,933.8 L102.0,874.0 L303.0,874.0 L303.0,933.8 Q308.8,969.6 320.8,993.5" stroke="#40e0d0" stroke-width="2" fill="none" shape-rendering="crispEdges"/><text x="168.8" y="869.0" fill="#40e0d0" font-size="12" textLength="66.4" lengthAdjust="spacingAndGlyphs">UPC Wi-Free</text><path d="M83.9,993.5 Q95.9,975.2 102.0,947.8 L102.0,902.0 L303.0,902.0 L303.0,947.8 Q308.8,975.2 320.8,993.5" stroke="#f0fff0" stroke-width="2" fill="none" shape-rendering="crispEdges"/><text x="168.5" y="897.0" fill="#f0fff0" font-size="12" textLength="67.0" lengthAdjust="spacingAndGlyphs">UPC2552434</text><path d="M616.8,993.5 Q628.8,968.8 635.0,931.8 L635.0,870.0 L836.0,870.0 L836.0,931.8 Q841.6,968.8 853.6,993.5" stroke="#ffff00" stroke-width="2" fill="none" shape-rendering="crispEdges"/><text x="716.1" y="865.0" fill="#ffff00" font-size="12" textLength="37.9" lengthAdjust="spacingAndGlyphs">Internet</text><path d="M143.2,993.5 Q155.2,961.4 161.0,913.2 L161.0,833.0 L362.0,833.0 L362.0,913.2 Q368.0,961.4 380.0,993.5" stroke="#6b8e23" stroke-width="2" fill="none" shape-rendering="crispEdges"/><text x="229.8" y="828.0" fill="#6b8e23" font-size="12" textLength="62.4" lengthAdjust="spacingAndGlyphs">HAVELKOVI</text><text x="855.5" y="803.0" fill="#bdb76b" font-size="12" textLength="41.0" lengthAdjust="spacingAndGlyphs">Etatest5</text><path d="M83.9,993.5 Q95.9,967.8 102.0,929.2 L102.0,865.0 L540.0,865.0 L540.0,929.2 Q545.5,967.8 557.5,993.5" stroke="#ff0000" stroke-width="2" fill="none" shape-rendering="crispEdges"/><text x="296.5" y="860.0" fill="#ff0000" font-size="12" textLength="48.4" lengthAdjust="spacingAndGlyphs">Xtreme24</text><path d="M143.2,993.5 Q155.2,977.0 161.0,952.2 L161.0,911.0 L599.0,911.0 L599.0,952.2 Q604.8,977.0 616.8,993.5" stroke="#32cd32" stroke-width="2" fill="none" shape-rendering="crispEdges"/><text x="341.9" y="906.0" fill="#32cd32" font-size="12" textLength="76.3" lengthAdjust="spacingAndGlyphs">TP-LINK_FD14</text><path d="M676.0,993.5 Q688.0,981.0 694.0,962.2 L694.0,931.0 L895.0,931.0 L895.0,962.2 Q900.8,981.0 912.8,993.5" stroke="#808080" stroke-width="2" fill="none" shape-rendering="crispEdges"/><text x="760.5" y="925.0" fill="#808080" font-size="12" textLength="67.0" lengthAdjust="spacingAndGlyphs">UPC3972776</text><path d="M83.9,993.5 Q95.9,982.6 102.0,966.2 L102.0,939.0 L540.0,939.0 L540.0,966.2 Q545.5,982.6 557.5,993.5" stroke="#800000" stroke-width="2" fill="none" shape-rendering="crispEdges"/><text x="296.0" y="935.0" fill="#800000" font-size="12" textLength="49.4" lengthAdjust="spacingAndGlyphs">Baby staff</text><path d="M676.0,993.5 Q688.0,980.2 694.0,960.2 L694.0,927.0 L895.0,927.0 L895.0,960.2 Q900.8,980.2 912.8,993.5" stroke="#fa8072" stroke-width="2" fill="none" shape-rendering="crispEdges"/><text x="763.6" y="920.0" fill="#fa8072" font-size="12" textLength="60.8" lengthAdjust="spacingAndGlyphs">UPC649409</text><path d="M202.3,993.5 Q214.3,980.2 220.0,960.2 L220.0,927.0 L658.0,927.0 L658.0,960.2 Q664.0,980.2 676.0,993.5" stroke="#40e0d0" stroke-width="2" fill="none" shape-rendering="crispEdges"/><text x="412.9" y="922.0" fill="#40e0d0" font-size="12" textLength="50.2" lengthAdjust="spacingAndGlyphs">Zima Blue</text><path d="M498.4,993.5 Q510.4,984.2 516.0,970.2 L516.0,947.0 L718.0,947.0 L718.0,970.2 Q723.1,984.2 735.1,993.5" stroke="#1e1e1e" stroke-width="2" fill="none" shape-rendering="crispEdges"/><text x="593.1" y="942.0" fill="#303030" font-size="12" textLength="47.8" lengthAdjust="spacingAndGlyphs">ekonomik</text><path d="M380.0,993.5 Q392.0,979.4 398.0,958.2 L398.0,923.0 L599.0,923.0 L599.0,958.2 Q604.8,979.4 616.8,993.5" stroke="#ff6347" stroke-width="2" fill="none" shape-rendering="crispEdges"/><text x="481.2" y="918.0" fill="#ff6347" font-size="12" textLength="33.5" lengthAdjust="spacingAndGlyphs">default</text></svg>
</body></html>
